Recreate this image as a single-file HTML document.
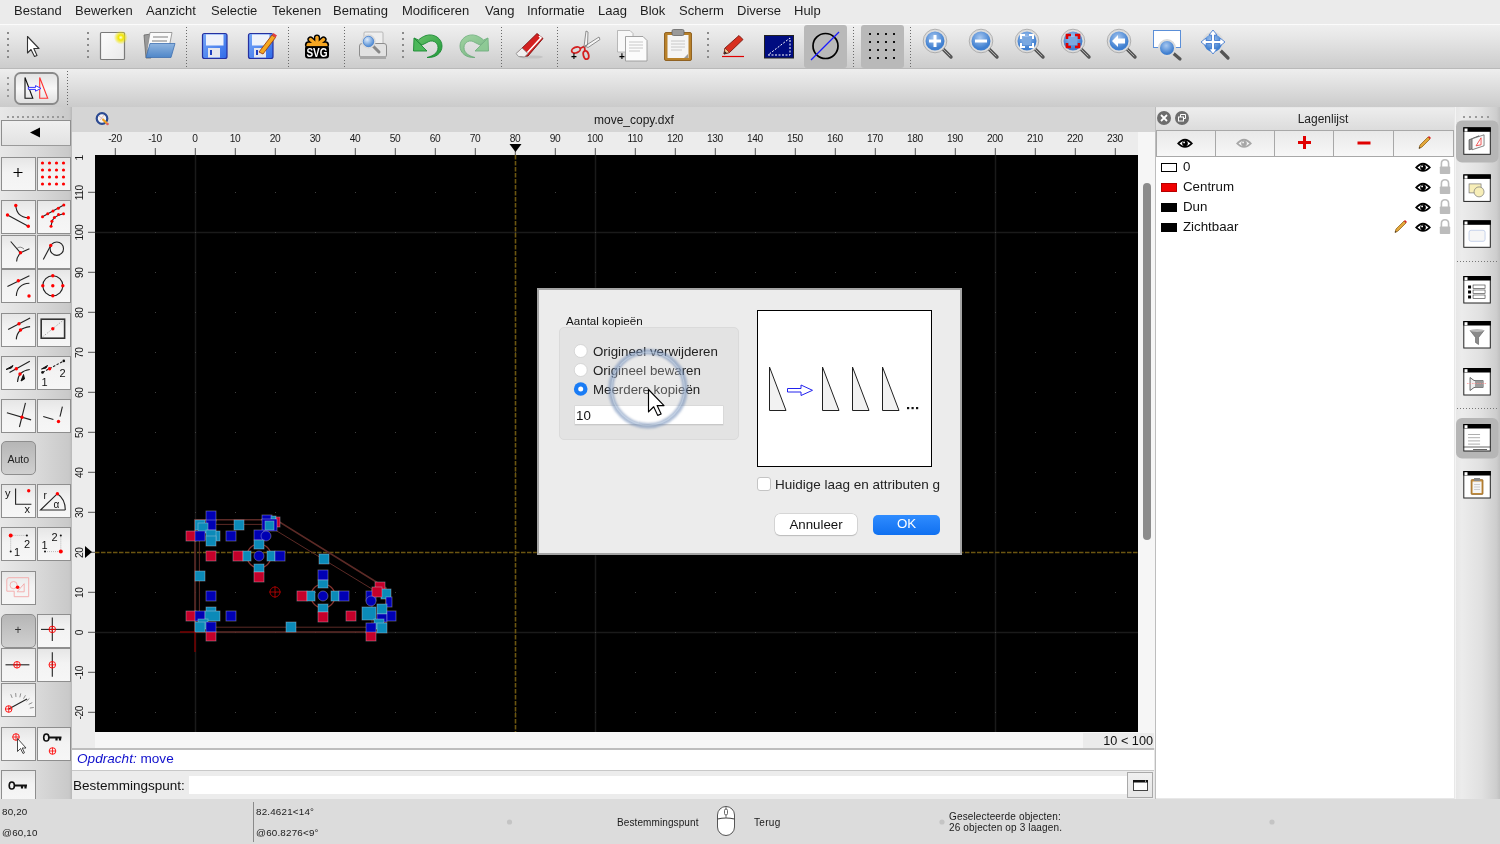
<!DOCTYPE html>
<html><head><meta charset="utf-8">
<style>
*{box-sizing:border-box;margin:0;padding:0}
html,body{width:1500px;height:844px;overflow:hidden;background:#e6e6e6;font-family:"Liberation Sans",sans-serif;color:#222}
.a{position:absolute}
svg{position:absolute;overflow:visible}
#menubar{left:0;top:0;width:1500px;height:24px;background:#ebebeb}
#menubar span{position:absolute;top:3px;font-size:13px;color:#1e1e1e;line-height:16px}
#tb1{left:0;top:24px;width:1500px;height:45px;background:linear-gradient(#efefef,#e6e6e6 30%,#cccccc);border-top:1px solid #fbfbfb;border-bottom:1px solid #b9b9b9}
#tb2{left:0;top:69px;width:1500px;height:39px;background:linear-gradient(#eeeeee,#e4e4e4 30%,#cbcbcb);border-bottom:1px solid #b6b6b6}
#left{left:0;top:107px;width:72px;height:692px;background:linear-gradient(90deg,#e8e8e8,#dadada 50%,#c9c9c9 96%,#b8b8b8)}
#title{left:72px;top:107px;width:1083px;height:25px;background:#d5d5d5}
#ruler{left:72px;top:132px;width:1083px;height:616px;background:#ececec}
#canvas{left:95px;top:155px;width:1043px;height:577px;background:#000;overflow:hidden}
#vscroll{left:1138px;top:132px;width:17px;height:616px;background:#f6f6f6}
#below{left:95px;top:732px;width:1043px;height:16px;background:#f6f6f6}
#cmdhist{left:72px;top:748px;width:1082px;height:23px;background:#fff;border-top:2px solid #bdbdbd;border-bottom:1px solid #c8c8c8}
#cmdline{left:72px;top:771px;width:1082px;height:28px;background:#ececec}
#dock{left:1155px;top:107px;width:300px;height:692px;background:#e8e8e8;border-left:1px solid #bdbdbd}
#rdock{left:1455px;top:107px;width:45px;height:692px;background:linear-gradient(90deg,#e6e6e6,#ececec 15%,#e0e0e0 60%,#cdcdcd 92%,#c0c0c0)}
#status{left:0;top:799px;width:1500px;height:45px;background:#dcdcdc}
.sep{position:absolute;width:2px;background-image:linear-gradient(#7a7a7a 50%,transparent 50%);background-size:2px 4px}
.hl{position:absolute;width:3px;background-image:radial-gradient(circle,#888 1px,transparent 1.2px);background-size:3px 8px}

</style></head><body><div id="root" style="position:absolute;left:0;top:0;width:1500px;height:844px;overflow:hidden;will-change:transform">
<div id="menubar" class="a">
<span style="left:14px">Bestand</span><span style="left:75px">Bewerken</span><span style="left:146px">Aanzicht</span><span style="left:211px">Selectie</span><span style="left:272px">Tekenen</span><span style="left:333px">Bemating</span><span style="left:402px">Modificeren</span><span style="left:485px">Vang</span><span style="left:527px">Informatie</span><span style="left:598px">Laag</span><span style="left:640px">Blok</span><span style="left:679px">Scherm</span><span style="left:737px">Diverse</span><span style="left:794px">Hulp</span>
</div>

<div id="tb1" class="a"></div>
<svg style="left:0;top:0" width="1500" height="70">
<defs>
<linearGradient id="gPaper" x1="0" y1="0" x2="1" y2="1"><stop offset="0" stop-color="#fdfdfd"/><stop offset="1" stop-color="#e9e9e9"/></linearGradient>
<radialGradient id="gGlow"><stop offset="0" stop-color="#ffffe0"/><stop offset="0.35" stop-color="#f2e600"/><stop offset="1" stop-color="#f2e600" stop-opacity="0"/></radialGradient>
<linearGradient id="gFold" x1="0" y1="0" x2="0" y2="1"><stop offset="0" stop-color="#8fb5e0"/><stop offset="1" stop-color="#4f86c8"/></linearGradient>
<linearGradient id="gSave" x1="0" y1="0" x2="1" y2="1"><stop offset="0" stop-color="#7aaaf8"/><stop offset="1" stop-color="#2f6ae8"/></linearGradient>
<linearGradient id="gGreen" x1="0" y1="0" x2="1" y2="1"><stop offset="0" stop-color="#6cc46c"/><stop offset="1" stop-color="#1f9a3a"/></linearGradient>
<radialGradient id="gLens" cx="0.4" cy="0.35"><stop offset="0" stop-color="#e0ecfa"/><stop offset="1" stop-color="#5d95d8"/></radialGradient>
<radialGradient id="gZoom" cx="0.45" cy="0.35"><stop offset="0" stop-color="#a8c8f0"/><stop offset="1" stop-color="#3f7fd0"/></radialGradient>
</defs>
<!-- handles / separators -->
<g fill="#8a8a8a">
<rect x="7" y="32" width="2" height="2"/><rect x="7" y="38" width="2" height="2"/><rect x="7" y="44" width="2" height="2"/><rect x="7" y="50" width="2" height="2"/><rect x="7" y="56" width="2" height="2"/>
<rect x="87" y="32" width="2" height="2"/><rect x="87" y="38" width="2" height="2"/><rect x="87" y="44" width="2" height="2"/><rect x="87" y="50" width="2" height="2"/><rect x="87" y="56" width="2" height="2"/>
<rect x="402" y="32" width="2" height="2"/><rect x="402" y="38" width="2" height="2"/><rect x="402" y="44" width="2" height="2"/><rect x="402" y="50" width="2" height="2"/><rect x="402" y="56" width="2" height="2"/>
<rect x="707" y="32" width="2" height="2"/><rect x="707" y="38" width="2" height="2"/><rect x="707" y="44" width="2" height="2"/><rect x="707" y="50" width="2" height="2"/><rect x="707" y="56" width="2" height="2"/>
</g>
<g stroke="#6a6a6a" stroke-width="1" stroke-dasharray="1,2">
<line x1="186.5" y1="27" x2="186.5" y2="67"/><line x1="288.5" y1="27" x2="288.5" y2="67"/><line x1="344.5" y1="27" x2="344.5" y2="67"/>
<line x1="501.5" y1="27" x2="501.5" y2="67"/><line x1="557.5" y1="27" x2="557.5" y2="67"/><line x1="853.5" y1="27" x2="853.5" y2="67"/><line x1="910.5" y1="27" x2="910.5" y2="67"/>
</g>
<!-- select arrow -->
<path d="M27.5,36.5 L27.5,53 L31,49.5 L34.5,56.5 L37,55.5 L33.8,48.5 L39,48.5 Z" fill="#fff" stroke="#333" stroke-width="1.1" stroke-linejoin="round"/>
<!-- new doc -->
<rect x="100.5" y="32.5" width="24" height="27" rx="1" fill="url(#gPaper)" stroke="#7a7a7a" stroke-width="1.2"/>
<circle cx="120.8" cy="37.5" r="7" fill="url(#gGlow)"/>
<!-- open folder -->
<path d="M144,35 L151,34 L151,58 L146,58 Z" fill="#9a9a9a" stroke="#666" stroke-width="0.8"/>
<path d="M150,32.5 L172,32.5 L169,48 L147,50 Z" fill="#fafafa" stroke="#888" stroke-width="0.8"/>
<rect x="153" y="36" width="15" height="2" fill="#bbb"/><rect x="152" y="40" width="15" height="2" fill="#bbb"/>
<path d="M150,43.5 L175,43.5 L171,57.5 L146,57.5 Z" fill="url(#gFold)" stroke="#3f70b0" stroke-width="0.8"/>
<!-- save -->
<rect x="202.5" y="33.5" width="24.5" height="25" rx="2" fill="url(#gSave)" stroke="#2530a0" stroke-width="1.2"/>
<rect x="206" y="34.5" width="17.5" height="11" fill="#eef2fb"/>
<rect x="208" y="48" width="12" height="9.5" fill="#e4e6ee"/><rect x="210" y="50" width="2" height="5" fill="#1f40c0"/>
<!-- save as -->
<rect x="248.5" y="33.5" width="24.5" height="25" rx="2" fill="url(#gSave)" stroke="#2530a0" stroke-width="1.2"/>
<rect x="252" y="34.5" width="17.5" height="11" fill="#eef2fb"/>
<rect x="254" y="48" width="12" height="9.5" fill="#e4e6ee"/><rect x="256" y="50" width="2" height="5" fill="#1f40c0"/>
<path d="M259,52 L272,35 L275.5,37.5 L263,54 Z" fill="#f4a820" stroke="#a04010" stroke-width="0.9"/>
<path d="M272,35 L273.5,33 L277,35.5 L275.5,37.5 Z" fill="#e04040"/>
<!-- svg -->
<g stroke-linecap="round">
<g stroke="#000" stroke-width="6.2"><line x1="317" y1="46" x2="317" y2="37.5"/><line x1="317" y1="46" x2="310.5" y2="39.5"/><line x1="317" y1="46" x2="323.5" y2="39.5"/><line x1="317" y1="46" x2="308" y2="44.5"/><line x1="317" y1="46" x2="326" y2="44.5"/></g>
<g stroke="#f5a623" stroke-width="3.4"><line x1="317" y1="45" x2="317" y2="37.5"/><line x1="317" y1="45" x2="310.5" y2="39.5"/><line x1="317" y1="45" x2="323.5" y2="39.5"/><line x1="317" y1="45" x2="308.5" y2="44.5"/><line x1="317" y1="45" x2="325.5" y2="44.5"/></g>
</g>
<rect x="305" y="45.5" width="24" height="13" rx="3" fill="#000"/>
<rect x="306.5" y="44.5" width="21" height="1.6" fill="#f5a623"/>
<text x="317" y="57" font-size="12.5" font-weight="bold" text-anchor="middle" fill="#fff" font-family="Liberation Sans" transform="translate(317,0) scale(0.8,1) translate(-317,0)">SVG</text>
<!-- print preview -->
<rect x="364" y="32" width="19" height="15" rx="1" fill="#eee" stroke="#aaa" stroke-width="0.8"/>
<rect x="359.5" y="43.5" width="27" height="14" rx="2.5" fill="#e2e2e2" stroke="#8d8d8d" stroke-width="1"/>
<rect x="360" y="56" width="26" height="3" fill="#a8a8a8"/>
<line x1="372" y1="45" x2="379" y2="52" stroke="#888" stroke-width="3" stroke-linecap="round"/>
<circle cx="368.5" cy="41.5" r="6.3" fill="url(#gLens)" stroke="#d8d8d8" stroke-width="1.8"/>
<circle cx="368.5" cy="41.5" r="5.2" fill="none" stroke="#4a84d0" stroke-width="0.8"/>
<!-- undo -->
<path d="M414,38 L422,45 L427,42.5 C432,39 438,42 438,47.5 C438,53 433,56 427,57.5 C436,58 442,53 442,46 C442,38.5 434,33 426,35.5 C423,36.5 420,38.5 418.5,40 Z" fill="url(#gGreen)" stroke="#1c8a34" stroke-width="0.9"/>
<path d="M414,38 L413.5,51 L427,51 Z" fill="#4cb85a" stroke="#1c8a34" stroke-width="0.9"/>
<!-- redo -->
<g opacity="0.55">
<path d="M488,38 L480,45 L475,42.5 C470,39 464,42 464,47.5 C464,53 469,56 475,57.5 C466,58 460,53 460,46 C460,38.5 468,33 476,35.5 C479,36.5 482,38.5 483.5,40 Z" fill="url(#gGreen)" stroke="#1c8a34" stroke-width="0.9"/>
<path d="M488,38 L488.5,51 L475,51 Z" fill="#4cb85a" stroke="#1c8a34" stroke-width="0.9"/>
</g>
<!-- eraser -->
<ellipse cx="531" cy="57" rx="12" ry="1.6" fill="#bbb" opacity="0.7"/>
<path d="M537,33.5 L543,38.5 L528,56 L521,56.5 L517,53 Z" fill="#d42020" stroke="#7a1010" stroke-width="0.9"/>
<path d="M539,36 L541,37.8 L527,53" stroke="#fff" stroke-width="1.6" fill="none"/>
<path d="M522,48 L528,53.5 L524.5,57 L518.5,56.5 L516,53.5 Z" fill="#f0f0f0" stroke="#888" stroke-width="0.8"/>
<!-- cut -->
<g fill="none" stroke="#d42020" stroke-width="1.8">
<ellipse cx="576" cy="50" rx="4.5" ry="2.8" transform="rotate(-20 576 50)"/>
<ellipse cx="586" cy="55" rx="2.6" ry="4.2" transform="rotate(-15 586 55)"/>
<path d="M580,48.5 L585,46 M585,51 L584.5,47"/>
</g>
<path d="M584,47 L586,31 L588,32 L587.5,45 Z M585,46 L599,37 L600,39.5 L588,47.5 Z" fill="#f5f5f5" stroke="#777" stroke-width="0.8"/>
<text x="571" y="60" font-size="10" font-weight="bold" fill="#000" font-family="Liberation Sans">+</text>
<!-- copy -->
<path d="M617.5,30.5 L630,30.5 L633,33.5 L633,52 L617.5,52 Z" fill="#f8f8f8" stroke="#aaa" stroke-width="0.8"/>
<path d="M625.5,36.5 L643,36.5 L647,40.5 L647,61 L625.5,61 Z" fill="#fbfbfb" stroke="#999" stroke-width="0.9"/>
<g stroke="#c8c8c8" stroke-width="1"><line x1="629" y1="42" x2="643" y2="42"/><line x1="629" y1="45" x2="643" y2="45"/><line x1="629" y1="48" x2="643" y2="48"/><line x1="629" y1="51" x2="640" y2="51"/></g>
<text x="619" y="60" font-size="10" font-weight="bold" fill="#000" font-family="Liberation Sans">+</text>
<!-- paste -->
<rect x="664.5" y="32.5" width="27" height="28" rx="1.5" fill="#b8812a" stroke="#8a5a18" stroke-width="0.9"/>
<rect x="667.5" y="35" width="21" height="23" fill="#f5f5f5"/>
<g stroke="#c8c8c8" stroke-width="1"><line x1="671" y1="41" x2="685" y2="41"/><line x1="671" y1="44" x2="685" y2="44"/><line x1="671" y1="47" x2="685" y2="47"/><line x1="671" y1="50" x2="682" y2="50"/></g>
<rect x="672" y="29.5" width="12" height="6" rx="1.5" fill="#9a9a9a" stroke="#666" stroke-width="0.8"/>
<path d="M688,54 L688,58 L684,58 Z" fill="#999"/>
<!-- pencil -->
<line x1="722" y1="56.5" x2="744" y2="56.5" stroke="#e00000" stroke-width="1.2"/>
<path d="M724,54 L725,48 L739,35.5 L743,39.5 L729.5,52.5 Z" fill="#d83020" stroke="#7a1a10" stroke-width="0.9"/>
<path d="M724,54 L725,48 L729.5,52.5 Z" fill="#f0c890" stroke="#7a1a10" stroke-width="0.7"/>
<path d="M724,54 L724.6,51 L727,53.3 Z" fill="#222"/>
<!-- rect icon -->
<rect x="764.5" y="35.5" width="29" height="22.5" fill="#000c80" stroke="#222" stroke-width="1"/>
<path d="M768,55 L790,55 L790,38 Z" fill="none" stroke="#fff" stroke-width="1" stroke-dasharray="2,1.5"/>
<!-- toggled buttons -->
<rect x="804" y="25" width="43" height="43" rx="3" fill="#b9b9b9"/>
<circle cx="825.5" cy="46" r="12.5" fill="none" stroke="#000" stroke-width="1.7"/>
<line x1="811" y1="60" x2="839" y2="32" stroke="#1a1aff" stroke-width="1.2"/>
<rect x="861" y="25" width="43" height="43" rx="3" fill="#b9b9b9"/>
<g fill="#111"><rect x="869" y="33" width="2" height="2"/><rect x="869" y="41" width="2" height="2"/><rect x="869" y="49" width="2" height="2"/><rect x="869" y="57" width="2" height="2"/><rect x="877" y="33" width="2" height="2"/><rect x="877" y="41" width="2" height="2"/><rect x="877" y="49" width="2" height="2"/><rect x="877" y="57" width="2" height="2"/><rect x="885" y="33" width="2" height="2"/><rect x="885" y="41" width="2" height="2"/><rect x="885" y="49" width="2" height="2"/><rect x="885" y="57" width="2" height="2"/><rect x="893" y="33" width="2" height="2"/><rect x="893" y="41" width="2" height="2"/><rect x="893" y="49" width="2" height="2"/><rect x="893" y="57" width="2" height="2"/></g>
<line x1="942" y1="48" x2="951" y2="57" stroke="#555" stroke-width="3.4" stroke-linecap="round"/><line x1="943" y1="49" x2="950" y2="56" stroke="#aaa" stroke-width="1" stroke-linecap="round"/><circle cx="935" cy="41" r="10.5" fill="url(#gZoom)" stroke="#dcdcdc" stroke-width="2"/><circle cx="935" cy="41" r="11.8" fill="none" stroke="#9a9a9a" stroke-width="0.7"/><path d="M929,41 h12 M935,35 v12" stroke="#fff" stroke-width="3"/><line x1="988" y1="48" x2="997" y2="57" stroke="#555" stroke-width="3.4" stroke-linecap="round"/><line x1="989" y1="49" x2="996" y2="56" stroke="#aaa" stroke-width="1" stroke-linecap="round"/><circle cx="981" cy="41" r="10.5" fill="url(#gZoom)" stroke="#dcdcdc" stroke-width="2"/><circle cx="981" cy="41" r="11.8" fill="none" stroke="#9a9a9a" stroke-width="0.7"/><path d="M975,41 h12" stroke="#fff" stroke-width="3"/><line x1="1034" y1="48" x2="1043" y2="57" stroke="#555" stroke-width="3.4" stroke-linecap="round"/><line x1="1035" y1="49" x2="1042" y2="56" stroke="#aaa" stroke-width="1" stroke-linecap="round"/><circle cx="1027" cy="41" r="10.5" fill="url(#gZoom)" stroke="#dcdcdc" stroke-width="2"/><circle cx="1027" cy="41" r="11.8" fill="none" stroke="#9a9a9a" stroke-width="0.7"/><rect x="1023" y="37" width="8" height="8" fill="#7aa8e0"/><path d="M1021,39 v-4 h4 M1029,35 h4 v4 M1033,43 v4 h-4 M1025,47 h-4 v-4" stroke="#fff" stroke-width="2" fill="none"/><line x1="1080" y1="48" x2="1089" y2="57" stroke="#555" stroke-width="3.4" stroke-linecap="round"/><line x1="1081" y1="49" x2="1088" y2="56" stroke="#aaa" stroke-width="1" stroke-linecap="round"/><circle cx="1073" cy="41" r="10.5" fill="url(#gZoom)" stroke="#dcdcdc" stroke-width="2"/><circle cx="1073" cy="41" r="11.8" fill="none" stroke="#9a9a9a" stroke-width="0.7"/><rect x="1069" y="37" width="8" height="8" fill="#7aa8e0"/><path d="M1067,39 v-4 h4 M1075,35 h4 v4 M1079,43 v4 h-4 M1071,47 h-4 v-4" stroke="#e00000" stroke-width="2.6" fill="none"/><line x1="1126" y1="48" x2="1135" y2="57" stroke="#555" stroke-width="3.4" stroke-linecap="round"/><line x1="1127" y1="49" x2="1134" y2="56" stroke="#aaa" stroke-width="1" stroke-linecap="round"/><circle cx="1119" cy="41" r="10.5" fill="url(#gZoom)" stroke="#dcdcdc" stroke-width="2"/><circle cx="1119" cy="41" r="11.8" fill="none" stroke="#9a9a9a" stroke-width="0.7"/><path d="M1112,41 l6,-6 v3.5 h7 v5 h-7 v3.5 z" fill="#fff"/><rect x="1153.5" y="30.5" width="27" height="17" fill="#fff" stroke="#5b8fd8" stroke-width="1"/><line x1="1173" y1="53" x2="1180" y2="59" stroke="#555" stroke-width="3.2" stroke-linecap="round"/><circle cx="1167" cy="48" r="8" fill="url(#gZoom)" stroke="#dcdcdc" stroke-width="2"/><line x1="1220" y1="50" x2="1228" y2="58" stroke="#555" stroke-width="3.2" stroke-linecap="round"/><circle cx="1213" cy="43" r="10" fill="url(#gZoom)" stroke="#dcdcdc" stroke-width="2"/><path d="M1213,30 l-4,5 h2.5 v5.5 h-5.5 v-2.5 l-5,4 l5,4 v-2.5 h5.5 v5.5 h-2.5 l4,5 l4,-5 h-2.5 v-5.5 h5.5 v2.5 l5,-4 l-5,-4 v2.5 h-5.5 v-5.5 h2.5 z" fill="#fff" stroke="#4a7fd0" stroke-width="0.9"/></svg>
<div id="tb2" class="a"></div>
<svg style="left:0;top:0" width="120" height="132">
<g fill="#999"><rect x="7" y="77" width="2" height="2"/><rect x="7" y="83" width="2" height="2"/><rect x="7" y="89" width="2" height="2"/><rect x="7" y="95" width="2" height="2"/></g>
<line x1="67.5" y1="71" x2="67.5" y2="105" stroke="#666" stroke-width="1" stroke-dasharray="1,2"/>
<defs><linearGradient id="gB2" x1="0" y1="0" x2="0" y2="1"><stop offset="0" stop-color="#e2e2e2"/><stop offset="0.5" stop-color="#f8f8f8"/><stop offset="1" stop-color="#dedede"/></linearGradient></defs>
<rect x="15" y="73" width="43" height="31" rx="5.5" fill="url(#gB2)" stroke="#8a8a8a" stroke-width="1.8"/>
<path d="M25,77.5 L25,98.3 L32.8,98.3 Z" fill="none" stroke="#111" stroke-width="1.1"/>
<path d="M39.7,77.5 L39.7,98.3 L47.7,98.3 Z" fill="none" stroke="#f33" stroke-width="1.1"/>
<path d="M28.3,87.4 H35.5 V85.6 L41,88.4 L35.5,91.2 V89.4 H28.3 Z" fill="#fff" stroke="#3333ff" stroke-width="1"/>
</svg>

<div id="left" class="a"></div>
<div class="a" style="left:1px;top:157px;width:34.5px;height:34px;background:linear-gradient(#e6e6e6,#f3f3f3 45%,#f6f6f6);border:1.5px solid #8e8e8e"></div>
<div class="a" style="left:36.5px;top:157px;width:34.5px;height:34px;background:linear-gradient(#e6e6e6,#f3f3f3 45%,#f6f6f6);border:1.5px solid #8e8e8e"></div>
<div class="a" style="left:1px;top:200px;width:34.5px;height:34px;background:linear-gradient(#e6e6e6,#f3f3f3 45%,#f6f6f6);border:1.5px solid #8e8e8e"></div>
<div class="a" style="left:36.5px;top:200px;width:34.5px;height:34px;background:linear-gradient(#e6e6e6,#f3f3f3 45%,#f6f6f6);border:1.5px solid #8e8e8e"></div>
<div class="a" style="left:1px;top:234.5px;width:34.5px;height:34px;background:linear-gradient(#e6e6e6,#f3f3f3 45%,#f6f6f6);border:1.5px solid #8e8e8e"></div>
<div class="a" style="left:36.5px;top:234.5px;width:34.5px;height:34px;background:linear-gradient(#e6e6e6,#f3f3f3 45%,#f6f6f6);border:1.5px solid #8e8e8e"></div>
<div class="a" style="left:1px;top:269px;width:34.5px;height:34px;background:linear-gradient(#e6e6e6,#f3f3f3 45%,#f6f6f6);border:1.5px solid #8e8e8e"></div>
<div class="a" style="left:36.5px;top:269px;width:34.5px;height:34px;background:linear-gradient(#e6e6e6,#f3f3f3 45%,#f6f6f6);border:1.5px solid #8e8e8e"></div>
<div class="a" style="left:1px;top:313px;width:34.5px;height:34px;background:linear-gradient(#e6e6e6,#f3f3f3 45%,#f6f6f6);border:1.5px solid #8e8e8e"></div>
<div class="a" style="left:36.5px;top:313px;width:34.5px;height:34px;background:linear-gradient(#e6e6e6,#f3f3f3 45%,#f6f6f6);border:1.5px solid #8e8e8e"></div>
<div class="a" style="left:1px;top:356px;width:34.5px;height:34px;background:linear-gradient(#e6e6e6,#f3f3f3 45%,#f6f6f6);border:1.5px solid #8e8e8e"></div>
<div class="a" style="left:36.5px;top:356px;width:34.5px;height:34px;background:linear-gradient(#e6e6e6,#f3f3f3 45%,#f6f6f6);border:1.5px solid #8e8e8e"></div>
<div class="a" style="left:1px;top:399px;width:34.5px;height:34px;background:linear-gradient(#e6e6e6,#f3f3f3 45%,#f6f6f6);border:1.5px solid #8e8e8e"></div>
<div class="a" style="left:36.5px;top:399px;width:34.5px;height:34px;background:linear-gradient(#e6e6e6,#f3f3f3 45%,#f6f6f6);border:1.5px solid #8e8e8e"></div>
<div class="a" style="left:1px;top:120px;width:70px;height:26px;background:linear-gradient(#f0f0f0,#e2e2e2);border:1.5px solid #8e8e8e;border-bottom-color:#9a9a9a"></div>
<div class="a" style="left:1px;top:441px;width:34.5px;height:34px;border-radius:5px;background:linear-gradient(#b6b6b6,#d0d0d0);border:1.3px solid #8e8e8e"></div>
<div class="a" style="left:1px;top:484px;width:34.5px;height:34px;background:linear-gradient(#e6e6e6,#f3f3f3 45%,#f6f6f6);border:1.5px solid #8e8e8e"></div>
<div class="a" style="left:36.5px;top:484px;width:34.5px;height:34px;background:linear-gradient(#e6e6e6,#f3f3f3 45%,#f6f6f6);border:1.5px solid #8e8e8e"></div>
<div class="a" style="left:1px;top:527px;width:34.5px;height:34px;background:linear-gradient(#e6e6e6,#f3f3f3 45%,#f6f6f6);border:1.5px solid #8e8e8e"></div>
<div class="a" style="left:36.5px;top:527px;width:34.5px;height:34px;background:linear-gradient(#e6e6e6,#f3f3f3 45%,#f6f6f6);border:1.5px solid #8e8e8e"></div>
<div class="a" style="left:1px;top:570.5px;width:34.5px;height:34px;background:linear-gradient(#e6e6e6,#f3f3f3 45%,#f6f6f6);border:1.5px solid #8e8e8e"></div>
<div class="a" style="left:1px;top:613.5px;width:34.5px;height:34px;border-radius:5px;background:linear-gradient(#b6b6b6,#d0d0d0);border:1.3px solid #8e8e8e"></div>
<div class="a" style="left:36.5px;top:613.5px;width:34.5px;height:34px;background:linear-gradient(#e6e6e6,#f3f3f3 45%,#f6f6f6);border:1.5px solid #8e8e8e"></div>
<div class="a" style="left:1px;top:648px;width:34.5px;height:34px;background:linear-gradient(#e6e6e6,#f3f3f3 45%,#f6f6f6);border:1.5px solid #8e8e8e"></div>
<div class="a" style="left:36.5px;top:648px;width:34.5px;height:34px;background:linear-gradient(#e6e6e6,#f3f3f3 45%,#f6f6f6);border:1.5px solid #8e8e8e"></div>
<div class="a" style="left:1px;top:683px;width:34.5px;height:34px;background:linear-gradient(#e6e6e6,#f3f3f3 45%,#f6f6f6);border:1.5px solid #8e8e8e"></div>
<div class="a" style="left:1px;top:726.5px;width:34.5px;height:34px;background:linear-gradient(#e6e6e6,#f3f3f3 45%,#f6f6f6);border:1.5px solid #8e8e8e"></div>
<div class="a" style="left:36.5px;top:726.5px;width:34.5px;height:34px;background:linear-gradient(#e6e6e6,#f3f3f3 45%,#f6f6f6);border:1.5px solid #8e8e8e"></div>
<div class="a" style="left:1px;top:769.5px;width:34.5px;height:32px;background:linear-gradient(#e6e6e6,#f3f3f3 45%,#f6f6f6);border:1.5px solid #8e8e8e"></div>
<svg style="left:0;top:0" width="72" height="844">
<g fill="#999"><rect x="7" y="116" width="2" height="2"/><rect x="12" y="116" width="2" height="2"/><rect x="17" y="116" width="2" height="2"/><rect x="22" y="116" width="2" height="2"/><rect x="27" y="116" width="2" height="2"/><rect x="32" y="116" width="2" height="2"/><rect x="37" y="116" width="2" height="2"/><rect x="42" y="116" width="2" height="2"/><rect x="47" y="116" width="2" height="2"/><rect x="52" y="116" width="2" height="2"/><rect x="57" y="116" width="2" height="2"/><rect x="62" y="116" width="2" height="2"/></g>
<path d="M30,132.5 L40,127.5 L40,137.5 Z" fill="#000"/>
<g transform="translate(1,157)"><path d="M12.5,15.5 h9 M17,11 v9" stroke="#000" stroke-width="1.1"/></g>
<g transform="translate(36.5,157)"><circle cx="6" cy="6" r="1.6" fill="#f00"/><circle cx="6" cy="13" r="1.6" fill="#f00"/><circle cx="6" cy="20" r="1.6" fill="#f00"/><circle cx="6" cy="27" r="1.6" fill="#f00"/><circle cx="13" cy="6" r="1.6" fill="#f00"/><circle cx="13" cy="13" r="1.6" fill="#f00"/><circle cx="13" cy="20" r="1.6" fill="#f00"/><circle cx="13" cy="27" r="1.6" fill="#f00"/><circle cx="20" cy="6" r="1.6" fill="#f00"/><circle cx="20" cy="13" r="1.6" fill="#f00"/><circle cx="20" cy="20" r="1.6" fill="#f00"/><circle cx="20" cy="27" r="1.6" fill="#f00"/><circle cx="27" cy="6" r="1.6" fill="#f00"/><circle cx="27" cy="13" r="1.6" fill="#f00"/><circle cx="27" cy="20" r="1.6" fill="#f00"/><circle cx="27" cy="27" r="1.6" fill="#f00"/></g>
<g transform="translate(1,200)"><line x1="6.5" y1="15" x2="27.3" y2="26.3" stroke="#222" stroke-width="1.1"/><path d="M14.8,5.5 Q15.5,17 27.3,17.8" fill="none" stroke="#222" stroke-width="1.1"/><circle cx="6.5" cy="15" r="1.7" fill="#f00"/><circle cx="27.3" cy="26.3" r="1.7" fill="#f00"/><circle cx="14.8" cy="5.5" r="1.7" fill="#f00"/><circle cx="27.3" cy="17.8" r="1.7" fill="#f00"/></g>
<g transform="translate(36.5,200)"><polyline points="6,16.7 27.3,5" fill="none" stroke="#222" stroke-width="1.1"/><path d="M14.5,26.3 L15.6,21.3 Q17.5,16 27,13.8" fill="none" stroke="#222" stroke-width="1.1"/><circle cx="6" cy="16.7" r="1.5" fill="#f00"/><circle cx="11.2" cy="13.8" r="1.5" fill="#f00"/><circle cx="16.5" cy="11" r="1.5" fill="#f00"/><circle cx="21.8" cy="8.2" r="1.5" fill="#f00"/><circle cx="27.3" cy="5" r="1.5" fill="#f00"/><circle cx="14.5" cy="26.3" r="1.5" fill="#f00"/><circle cx="15.4" cy="21.3" r="1.5" fill="#f00"/><circle cx="17.9" cy="17.5" r="1.5" fill="#f00"/><circle cx="22" cy="14.6" r="1.5" fill="#f00"/><circle cx="27" cy="13.8" r="1.5" fill="#f00"/></g>
<g transform="translate(1,234.5)"><line x1="9.7" y1="7" x2="19.5" y2="18.3" stroke="#222" stroke-width="1.1"/><line x1="19.5" y1="18.3" x2="28.4" y2="14.2" stroke="#222" stroke-width="1.1"/><path d="M19.5,18.3 Q16,22 15.6,27" fill="none" stroke="#222" stroke-width="1.1"/><path d="M16,14 Q19,11 23,14.5" fill="none" stroke="#444" stroke-width="0.6"/><circle cx="19.5" cy="18.3" r="1.7" fill="#f00"/></g>
<g transform="translate(36.5,234.5)"><circle cx="20.3" cy="14.2" r="6.7" fill="none" stroke="#222" stroke-width="1.1"/><line x1="6.8" y1="25" x2="14.2" y2="11" stroke="#222" stroke-width="1.1"/><circle cx="14.2" cy="11" r="1.7" fill="#f00"/></g>
<g transform="translate(1,269)"><line x1="6.4" y1="17.5" x2="28.4" y2="6.7" stroke="#222" stroke-width="1.1"/><circle cx="17.3" cy="11.7" r="1.7" fill="#f00"/><path d="M15.3,27 Q16,15 28.4,14.3" fill="none" stroke="#222" stroke-width="1.1"/><circle cx="28" cy="27" r="1.7" fill="#f00"/></g>
<g transform="translate(36.5,269)"><circle cx="16.3" cy="16.8" r="10" fill="none" stroke="#222" stroke-width="1.1"/><circle cx="16.3" cy="16.8" r="1.7" fill="#f00"/><circle cx="6.3" cy="16.8" r="1.7" fill="#f00"/><circle cx="26.3" cy="16.8" r="1.7" fill="#f00"/><circle cx="16.3" cy="6.8" r="1.7" fill="#f00"/><circle cx="16.3" cy="26.8" r="1.7" fill="#f00"/></g>
<g transform="translate(1,313)"><line x1="7.1" y1="16.4" x2="29.1" y2="5" stroke="#222" stroke-width="1.1"/><circle cx="18" cy="10.8" r="1.7" fill="#f00"/><path d="M15.3,26.4 Q16,15 29.1,13.6" fill="none" stroke="#222" stroke-width="1.1"/><circle cx="19.5" cy="17" r="1.7" fill="#f00"/></g>
<g transform="translate(36.5,313)"><rect x="4.7" y="6.2" width="23.4" height="19" fill="none" stroke="#333" stroke-width="1.6"/><line x1="6" y1="24" x2="27" y2="7" stroke="#888" stroke-width="0.7" stroke-dasharray="1.5,1.5"/><circle cx="16.3" cy="15.7" r="1.7" fill="#f00"/></g>
<g transform="translate(1,356)"><line x1="8.5" y1="16.4" x2="28.8" y2="5.2" stroke="#222" stroke-width="1.1"/><path d="M16.5,26 Q17,15 28.8,13.5" fill="none" stroke="#222" stroke-width="1.1"/><path d="M5,13.5 L12,9.5 L10.5,12 Z M20,25 L22.5,18.5 L23.5,23 Z" fill="#111" stroke="#111" stroke-width="1"/><circle cx="15.3" cy="12.7" r="1.7" fill="#f00"/><circle cx="19" cy="18" r="1.7" fill="#f00"/></g>
<g transform="translate(36.5,356)"><line x1="6" y1="16.4" x2="27.3" y2="4.9" stroke="#222" stroke-width="1.1" stroke-dasharray="2.5,1.5"/><path d="M5,13 L11,9.5 L9.5,12 Z" fill="#111" stroke="#111"/><circle cx="27.3" cy="4.9" r="1.3" fill="#111"/><circle cx="6" cy="16.4" r="1.3" fill="#111"/><circle cx="13.1" cy="12.7" r="1.7" fill="#f00"/><text x="5" y="30" font-size="11" fill="#111">1</text><text x="23" y="21" font-size="11" fill="#111">2</text></g>
<g transform="translate(1,399)"><line x1="5.9" y1="13.8" x2="30.1" y2="20.9" stroke="#222" stroke-width="1.1"/><line x1="24.5" y1="3.8" x2="18.4" y2="28" stroke="#222" stroke-width="1.1"/><circle cx="21" cy="18.2" r="1.7" fill="#f00"/></g>
<g transform="translate(36.5,399)"><line x1="6.7" y1="17.4" x2="16.9" y2="20.6" stroke="#222" stroke-width="1.1"/><line x1="25.9" y1="7.6" x2="23.5" y2="17.7" stroke="#222" stroke-width="1.1"/><circle cx="22" cy="22.5" r="1.7" fill="#f00"/></g>
<text x="18.3" y="463" font-size="10.6" text-anchor="middle" fill="#222">Auto</text>
<g transform="translate(1,484)"><text x="4" y="13" font-size="11" fill="#111">y</text><path d="M14.6,4.6 V20.3 H30.4" fill="none" stroke="#222" stroke-width="1.1"/><circle cx="27.7" cy="6.8" r="1.7" fill="#f00"/><text x="23.5" y="29" font-size="11" fill="#111">x</text></g>
<g transform="translate(36.5,484)"><path d="M28.8,26 H4 L20.9,9.7 Q28.8,15 28.8,26" fill="none" stroke="#222" stroke-width="1.1"/><circle cx="20.9" cy="9.7" r="1.7" fill="#f00"/><text x="7" y="15" font-size="10" fill="#111">r</text><text x="17" y="23.5" font-size="10" fill="#111">α</text></g>
<g transform="translate(1,527)"><path d="M9.7,8.4 H25.9 M9.7,8.4 V24.6" stroke="#aaa" stroke-width="0.8" stroke-dasharray="1,1"/><circle cx="9.7" cy="8.4" r="2" fill="#f00"/><circle cx="25.9" cy="8.4" r="1" fill="#111"/><circle cx="9.7" cy="24.6" r="1" fill="#111"/><text x="13" y="29" font-size="11" fill="#111">1</text><text x="23" y="21" font-size="11" fill="#111">2</text></g>
<g transform="translate(36.5,527)"><path d="M8.5,24.6 H24.3 M24.3,8.4 V24.6" stroke="#aaa" stroke-width="0.8" stroke-dasharray="1,1"/><circle cx="24.3" cy="24.6" r="2" fill="#f00"/><circle cx="8.5" cy="24.6" r="1" fill="#111"/><circle cx="24.3" cy="8.4" r="1" fill="#111"/><text x="5" y="22" font-size="11" fill="#111">1</text><text x="15" y="14" font-size="11" fill="#111">2</text></g>
<g transform="translate(1,570.5)"><path d="M8,7.2 H27.7 V26.2 H13.2 V20.7 H5.8 V9.5 Q5.8,7.2 8,7.2" fill="none" stroke="#f4a8a8" stroke-width="0.9"/><circle cx="12.6" cy="14.6" r="3.6" fill="none" stroke="#f4a8a8" stroke-width="0.9"/><path d="M23.2,13.2 V21.3 H16.1 Z" fill="none" stroke="#f4a8a8" stroke-width="0.9"/><circle cx="16.6" cy="16.7" r="1.8" fill="#f00"/></g>
<text x="18" y="634" font-size="12" text-anchor="middle" fill="#333">+</text>
<g transform="translate(36.5,613.5)"><line x1="4.5" y1="15.9" x2="27.8" y2="15.9" stroke="#222" stroke-width="1.1"/><line x1="15.8" y1="3.9" x2="15.8" y2="27.5" stroke="#222" stroke-width="1.1"/><circle cx="15.8" cy="15.9" r="3.3" fill="none" stroke="#f00" stroke-width="0.9"/><path d="M12.5,15.9 h6.6 M15.8,12.600000000000001 v6.6" stroke="#f00" stroke-width="0.8"/></g>
<g transform="translate(1,648)"><line x1="4.5" y1="16.8" x2="28.4" y2="16.8" stroke="#222" stroke-width="1.1"/><circle cx="16" cy="16.8" r="3.3" fill="none" stroke="#f00" stroke-width="0.9"/><path d="M12.7,16.8 h6.6 M16,13.5 v6.6" stroke="#f00" stroke-width="0.8"/></g>
<g transform="translate(36.5,648)"><line x1="15.8" y1="4.3" x2="15.8" y2="28.7" stroke="#222" stroke-width="1.1"/><circle cx="15.8" cy="16.8" r="3.3" fill="none" stroke="#f00" stroke-width="0.9"/><path d="M12.5,16.8 h6.6 M15.8,13.5 v6.6" stroke="#f00" stroke-width="0.8"/></g>
<g transform="translate(1,683)"><line x1="28.854024013168548" y1="25.057304277843212" x2="32.809108324912714" y2="24.459551747948815" stroke="#777" stroke-width="0.8"/><line x1="27.7058123305848" y1="21.345448056554005" x2="31.307600739995507" y2="19.605585920109085" stroke="#777" stroke-width="0.8"/><line x1="25.51195529535967" y1="18.138696119696654" x2="28.438710770854954" y2="15.41214107960332" stroke="#777" stroke-width="0.8"/><line x1="22.46842362259245" y1="15.723498067277779" x2="24.45870781415936" y2="12.253805164901712" stroke="#777" stroke-width="0.8"/><line x1="18.84708693220954" y1="14.315596348253433" x2="19.723113680581704" y2="10.412702916946795" stroke="#777" stroke-width="0.8"/><line x1="14.97142844551246" y1="14.040754630099055" x2="14.654944890285524" y2="10.05329451628338" stroke="#777" stroke-width="0.8"/><line x1="11.18764919243327" y1="14.923523704949698" x2="9.706925867028122" y2="11.20768484493422" stroke="#777" stroke-width="0.8"/><line x1="7.7" y1="26" x2="26" y2="16" stroke="#222" stroke-width="1.1"/><circle cx="7.7" cy="26" r="3.3" fill="none" stroke="#f00" stroke-width="0.9"/><path d="M4.4,26 h6.6 M7.7,22.7 v6.6" stroke="#f00" stroke-width="0.8"/></g>
<g transform="translate(1,726.5)"><circle cx="15" cy="10.5" r="3.3" fill="none" stroke="#f00" stroke-width="0.9"/><path d="M11.7,10.5 h6.6 M15,7.2 v6.6" stroke="#f00" stroke-width="0.8"/><path d="M16.5,12 L16.5,25 L19.5,22 L22,27 L23.5,26.2 L21.2,21.5 L25,21.5 Z" fill="#fff" stroke="#333" stroke-width="0.9"/></g>
<g transform="translate(36.5,726.5)"><g transform="translate(7,8)"><ellipse cx="2.8" cy="3" rx="2.6" ry="3.5" fill="none" stroke="#111" stroke-width="1.6"/><path d="M5.5,3 H18 M13,3 V6 M16.5,3 V6" stroke="#111" stroke-width="2.2"/></g><circle cx="16" cy="24.5" r="3.3" fill="none" stroke="#f00" stroke-width="0.9"/><path d="M12.7,24.5 h6.6 M16,21.2 v6.6" stroke="#f00" stroke-width="0.8"/></g>
<g transform="translate(1,769.5)"><g transform="translate(8,13)"><ellipse cx="2.8" cy="3" rx="2.6" ry="3.5" fill="none" stroke="#111" stroke-width="1.6"/><path d="M5.5,3 H18 M13,3 V6 M16.5,3 V6" stroke="#111" stroke-width="2.2"/></g></g>
</svg>
<div id="title" class="a"></div>
<div id="ruler" class="a"></div>
<svg style="left:0;top:0" width="120" height="132"><!-- title icon --> <circle cx="102" cy="118.5" r="5.3" fill="#f4f4f4" stroke="#2c4a92" stroke-width="2.2"/> <path d="M99,116 L105,121 M100,120 L104,115" stroke="#c88" stroke-width="0.5"/> <line x1="102.5" y1="119" x2="107" y2="123.5" stroke="#f0a020" stroke-width="2.2"/> <circle cx="107.5" cy="124" r="1.3" fill="#e06060"/> </svg>
<div class="a" style="left:594px;top:113px;font-size:12px;line-height:15px;color:#1a1a1a">move_copy.dxf</div>
<svg style="left:0;top:0" width="1500" height="844">
<defs><clipPath id="hr"><rect x="95" y="132" width="1043" height="23"/></clipPath><clipPath id="vr"><rect x="72" y="155" width="23" height="577"/></clipPath></defs>
<g clip-path="url(#hr)">
<line x1="115.30000000000001" y1="148" x2="115.30000000000001" y2="155" stroke="#555" stroke-width="1"/>
<text x="114.9" y="142" font-size="10.2" text-anchor="middle" fill="#1a1a1a" letter-spacing="-0.4">-20</text>
<line x1="155.3" y1="148" x2="155.3" y2="155" stroke="#555" stroke-width="1"/>
<text x="154.9" y="142" font-size="10.2" text-anchor="middle" fill="#1a1a1a" letter-spacing="-0.4">-10</text>
<line x1="195.3" y1="148" x2="195.3" y2="155" stroke="#555" stroke-width="1"/>
<text x="194.9" y="142" font-size="10.2" text-anchor="middle" fill="#1a1a1a" letter-spacing="-0.4">0</text>
<line x1="235.3" y1="148" x2="235.3" y2="155" stroke="#555" stroke-width="1"/>
<text x="234.9" y="142" font-size="10.2" text-anchor="middle" fill="#1a1a1a" letter-spacing="-0.4">10</text>
<line x1="275.3" y1="148" x2="275.3" y2="155" stroke="#555" stroke-width="1"/>
<text x="274.90000000000003" y="142" font-size="10.2" text-anchor="middle" fill="#1a1a1a" letter-spacing="-0.4">20</text>
<line x1="315.3" y1="148" x2="315.3" y2="155" stroke="#555" stroke-width="1"/>
<text x="314.90000000000003" y="142" font-size="10.2" text-anchor="middle" fill="#1a1a1a" letter-spacing="-0.4">30</text>
<line x1="355.3" y1="148" x2="355.3" y2="155" stroke="#555" stroke-width="1"/>
<text x="354.90000000000003" y="142" font-size="10.2" text-anchor="middle" fill="#1a1a1a" letter-spacing="-0.4">40</text>
<line x1="395.3" y1="148" x2="395.3" y2="155" stroke="#555" stroke-width="1"/>
<text x="394.90000000000003" y="142" font-size="10.2" text-anchor="middle" fill="#1a1a1a" letter-spacing="-0.4">50</text>
<line x1="435.3" y1="148" x2="435.3" y2="155" stroke="#555" stroke-width="1"/>
<text x="434.90000000000003" y="142" font-size="10.2" text-anchor="middle" fill="#1a1a1a" letter-spacing="-0.4">60</text>
<line x1="475.3" y1="148" x2="475.3" y2="155" stroke="#555" stroke-width="1"/>
<text x="474.90000000000003" y="142" font-size="10.2" text-anchor="middle" fill="#1a1a1a" letter-spacing="-0.4">70</text>
<line x1="515.3" y1="148" x2="515.3" y2="155" stroke="#555" stroke-width="1"/>
<text x="514.9" y="142" font-size="10.2" text-anchor="middle" fill="#1a1a1a" letter-spacing="-0.4">80</text>
<line x1="555.3" y1="148" x2="555.3" y2="155" stroke="#555" stroke-width="1"/>
<text x="554.9" y="142" font-size="10.2" text-anchor="middle" fill="#1a1a1a" letter-spacing="-0.4">90</text>
<line x1="595.3" y1="148" x2="595.3" y2="155" stroke="#555" stroke-width="1"/>
<text x="594.9" y="142" font-size="10.2" text-anchor="middle" fill="#1a1a1a" letter-spacing="-0.4">100</text>
<line x1="635.3" y1="148" x2="635.3" y2="155" stroke="#555" stroke-width="1"/>
<text x="634.9" y="142" font-size="10.2" text-anchor="middle" fill="#1a1a1a" letter-spacing="-0.4">110</text>
<line x1="675.3" y1="148" x2="675.3" y2="155" stroke="#555" stroke-width="1"/>
<text x="674.9" y="142" font-size="10.2" text-anchor="middle" fill="#1a1a1a" letter-spacing="-0.4">120</text>
<line x1="715.3" y1="148" x2="715.3" y2="155" stroke="#555" stroke-width="1"/>
<text x="714.9" y="142" font-size="10.2" text-anchor="middle" fill="#1a1a1a" letter-spacing="-0.4">130</text>
<line x1="755.3" y1="148" x2="755.3" y2="155" stroke="#555" stroke-width="1"/>
<text x="754.9" y="142" font-size="10.2" text-anchor="middle" fill="#1a1a1a" letter-spacing="-0.4">140</text>
<line x1="795.3" y1="148" x2="795.3" y2="155" stroke="#555" stroke-width="1"/>
<text x="794.9" y="142" font-size="10.2" text-anchor="middle" fill="#1a1a1a" letter-spacing="-0.4">150</text>
<line x1="835.3" y1="148" x2="835.3" y2="155" stroke="#555" stroke-width="1"/>
<text x="834.9" y="142" font-size="10.2" text-anchor="middle" fill="#1a1a1a" letter-spacing="-0.4">160</text>
<line x1="875.3" y1="148" x2="875.3" y2="155" stroke="#555" stroke-width="1"/>
<text x="874.9" y="142" font-size="10.2" text-anchor="middle" fill="#1a1a1a" letter-spacing="-0.4">170</text>
<line x1="915.3" y1="148" x2="915.3" y2="155" stroke="#555" stroke-width="1"/>
<text x="914.9" y="142" font-size="10.2" text-anchor="middle" fill="#1a1a1a" letter-spacing="-0.4">180</text>
<line x1="955.3" y1="148" x2="955.3" y2="155" stroke="#555" stroke-width="1"/>
<text x="954.9" y="142" font-size="10.2" text-anchor="middle" fill="#1a1a1a" letter-spacing="-0.4">190</text>
<line x1="995.3" y1="148" x2="995.3" y2="155" stroke="#555" stroke-width="1"/>
<text x="994.9" y="142" font-size="10.2" text-anchor="middle" fill="#1a1a1a" letter-spacing="-0.4">200</text>
<line x1="1035.3" y1="148" x2="1035.3" y2="155" stroke="#555" stroke-width="1"/>
<text x="1034.8999999999999" y="142" font-size="10.2" text-anchor="middle" fill="#1a1a1a" letter-spacing="-0.4">210</text>
<line x1="1075.3" y1="148" x2="1075.3" y2="155" stroke="#555" stroke-width="1"/>
<text x="1074.8999999999999" y="142" font-size="10.2" text-anchor="middle" fill="#1a1a1a" letter-spacing="-0.4">220</text>
<line x1="1115.3" y1="148" x2="1115.3" y2="155" stroke="#555" stroke-width="1"/>
<text x="1114.8999999999999" y="142" font-size="10.2" text-anchor="middle" fill="#1a1a1a" letter-spacing="-0.4">230</text>
<line x1="1155.3" y1="148" x2="1155.3" y2="155" stroke="#555" stroke-width="1"/>
<text x="1154.8999999999999" y="142" font-size="10.2" text-anchor="middle" fill="#1a1a1a" letter-spacing="-0.4">240</text>
<path d="M509.5,144 L521.5,144 L515.5,152 Z" fill="#000"/>
</g><g clip-path="url(#vr)">
<line x1="88" y1="752.3" x2="95" y2="752.3" stroke="#555" stroke-width="1"/>
<text x="0" y="0" transform="translate(83,752.6999999999999) rotate(-90)" font-size="10.2" text-anchor="middle" fill="#1a1a1a" letter-spacing="-0.4">-30</text>
<line x1="88" y1="712.3" x2="95" y2="712.3" stroke="#555" stroke-width="1"/>
<text x="0" y="0" transform="translate(83,712.6999999999999) rotate(-90)" font-size="10.2" text-anchor="middle" fill="#1a1a1a" letter-spacing="-0.4">-20</text>
<line x1="88" y1="672.3" x2="95" y2="672.3" stroke="#555" stroke-width="1"/>
<text x="0" y="0" transform="translate(83,672.6999999999999) rotate(-90)" font-size="10.2" text-anchor="middle" fill="#1a1a1a" letter-spacing="-0.4">-10</text>
<line x1="88" y1="632.3" x2="95" y2="632.3" stroke="#555" stroke-width="1"/>
<text x="0" y="0" transform="translate(83,632.6999999999999) rotate(-90)" font-size="10.2" text-anchor="middle" fill="#1a1a1a" letter-spacing="-0.4">0</text>
<line x1="88" y1="592.3" x2="95" y2="592.3" stroke="#555" stroke-width="1"/>
<text x="0" y="0" transform="translate(83,592.6999999999999) rotate(-90)" font-size="10.2" text-anchor="middle" fill="#1a1a1a" letter-spacing="-0.4">10</text>
<line x1="88" y1="552.3" x2="95" y2="552.3" stroke="#555" stroke-width="1"/>
<text x="0" y="0" transform="translate(83,552.6999999999999) rotate(-90)" font-size="10.2" text-anchor="middle" fill="#1a1a1a" letter-spacing="-0.4">20</text>
<line x1="88" y1="512.3" x2="95" y2="512.3" stroke="#555" stroke-width="1"/>
<text x="0" y="0" transform="translate(83,512.6999999999999) rotate(-90)" font-size="10.2" text-anchor="middle" fill="#1a1a1a" letter-spacing="-0.4">30</text>
<line x1="88" y1="472.29999999999995" x2="95" y2="472.29999999999995" stroke="#555" stroke-width="1"/>
<text x="0" y="0" transform="translate(83,472.69999999999993) rotate(-90)" font-size="10.2" text-anchor="middle" fill="#1a1a1a" letter-spacing="-0.4">40</text>
<line x1="88" y1="432.29999999999995" x2="95" y2="432.29999999999995" stroke="#555" stroke-width="1"/>
<text x="0" y="0" transform="translate(83,432.69999999999993) rotate(-90)" font-size="10.2" text-anchor="middle" fill="#1a1a1a" letter-spacing="-0.4">50</text>
<line x1="88" y1="392.29999999999995" x2="95" y2="392.29999999999995" stroke="#555" stroke-width="1"/>
<text x="0" y="0" transform="translate(83,392.69999999999993) rotate(-90)" font-size="10.2" text-anchor="middle" fill="#1a1a1a" letter-spacing="-0.4">60</text>
<line x1="88" y1="352.29999999999995" x2="95" y2="352.29999999999995" stroke="#555" stroke-width="1"/>
<text x="0" y="0" transform="translate(83,352.69999999999993) rotate(-90)" font-size="10.2" text-anchor="middle" fill="#1a1a1a" letter-spacing="-0.4">70</text>
<line x1="88" y1="312.29999999999995" x2="95" y2="312.29999999999995" stroke="#555" stroke-width="1"/>
<text x="0" y="0" transform="translate(83,312.69999999999993) rotate(-90)" font-size="10.2" text-anchor="middle" fill="#1a1a1a" letter-spacing="-0.4">80</text>
<line x1="88" y1="272.29999999999995" x2="95" y2="272.29999999999995" stroke="#555" stroke-width="1"/>
<text x="0" y="0" transform="translate(83,272.69999999999993) rotate(-90)" font-size="10.2" text-anchor="middle" fill="#1a1a1a" letter-spacing="-0.4">90</text>
<line x1="88" y1="232.29999999999995" x2="95" y2="232.29999999999995" stroke="#555" stroke-width="1"/>
<text x="0" y="0" transform="translate(83,232.69999999999996) rotate(-90)" font-size="10.2" text-anchor="middle" fill="#1a1a1a" letter-spacing="-0.4">100</text>
<line x1="88" y1="192.29999999999995" x2="95" y2="192.29999999999995" stroke="#555" stroke-width="1"/>
<text x="0" y="0" transform="translate(83,192.69999999999996) rotate(-90)" font-size="10.2" text-anchor="middle" fill="#1a1a1a" letter-spacing="-0.4">110</text>
<line x1="88" y1="152.29999999999995" x2="95" y2="152.29999999999995" stroke="#555" stroke-width="1"/>
<text x="0" y="0" transform="translate(83,152.69999999999996) rotate(-90)" font-size="10.2" text-anchor="middle" fill="#1a1a1a" letter-spacing="-0.4">120</text>
<path d="M85,546 L85,558 L92,552 Z" fill="#000"/>
</g></svg>
<div id="canvas" class="a"></div>
<svg style="left:95px;top:155px" width="1043" height="577" viewBox="95 155 1043 577">
<rect x="95" y="155" width="1043" height="577" fill="#000"/>
<line x1="195.5" y1="155" x2="195.5" y2="732" stroke="#1a1a1a" stroke-width="1.5"/>
<line x1="595.5" y1="155" x2="595.5" y2="732" stroke="#1a1a1a" stroke-width="1.5"/>
<line x1="995.5" y1="155" x2="995.5" y2="732" stroke="#1a1a1a" stroke-width="1.5"/>
<line x1="95" y1="232.5" x2="1138" y2="232.5" stroke="#1a1a1a" stroke-width="1.5"/>
<line x1="95" y1="632.5" x2="1138" y2="632.5" stroke="#1a1a1a" stroke-width="1.5"/>
<path d="M115,712h1v1h-1zM115,672h1v1h-1zM115,632h1v1h-1zM115,592h1v1h-1zM115,552h1v1h-1zM115,512h1v1h-1zM115,472h1v1h-1zM115,432h1v1h-1zM115,392h1v1h-1zM115,352h1v1h-1zM115,312h1v1h-1zM115,272h1v1h-1zM115,232h1v1h-1zM115,192h1v1h-1zM155,712h1v1h-1zM155,672h1v1h-1zM155,632h1v1h-1zM155,592h1v1h-1zM155,552h1v1h-1zM155,512h1v1h-1zM155,472h1v1h-1zM155,432h1v1h-1zM155,392h1v1h-1zM155,352h1v1h-1zM155,312h1v1h-1zM155,272h1v1h-1zM155,232h1v1h-1zM155,192h1v1h-1zM195,712h1v1h-1zM195,672h1v1h-1zM195,632h1v1h-1zM195,592h1v1h-1zM195,552h1v1h-1zM195,512h1v1h-1zM195,472h1v1h-1zM195,432h1v1h-1zM195,392h1v1h-1zM195,352h1v1h-1zM195,312h1v1h-1zM195,272h1v1h-1zM195,232h1v1h-1zM195,192h1v1h-1zM235,712h1v1h-1zM235,672h1v1h-1zM235,632h1v1h-1zM235,592h1v1h-1zM235,552h1v1h-1zM235,512h1v1h-1zM235,472h1v1h-1zM235,432h1v1h-1zM235,392h1v1h-1zM235,352h1v1h-1zM235,312h1v1h-1zM235,272h1v1h-1zM235,232h1v1h-1zM235,192h1v1h-1zM275,712h1v1h-1zM275,672h1v1h-1zM275,632h1v1h-1zM275,592h1v1h-1zM275,552h1v1h-1zM275,512h1v1h-1zM275,472h1v1h-1zM275,432h1v1h-1zM275,392h1v1h-1zM275,352h1v1h-1zM275,312h1v1h-1zM275,272h1v1h-1zM275,232h1v1h-1zM275,192h1v1h-1zM315,712h1v1h-1zM315,672h1v1h-1zM315,632h1v1h-1zM315,592h1v1h-1zM315,552h1v1h-1zM315,512h1v1h-1zM315,472h1v1h-1zM315,432h1v1h-1zM315,392h1v1h-1zM315,352h1v1h-1zM315,312h1v1h-1zM315,272h1v1h-1zM315,232h1v1h-1zM315,192h1v1h-1zM355,712h1v1h-1zM355,672h1v1h-1zM355,632h1v1h-1zM355,592h1v1h-1zM355,552h1v1h-1zM355,512h1v1h-1zM355,472h1v1h-1zM355,432h1v1h-1zM355,392h1v1h-1zM355,352h1v1h-1zM355,312h1v1h-1zM355,272h1v1h-1zM355,232h1v1h-1zM355,192h1v1h-1zM395,712h1v1h-1zM395,672h1v1h-1zM395,632h1v1h-1zM395,592h1v1h-1zM395,552h1v1h-1zM395,512h1v1h-1zM395,472h1v1h-1zM395,432h1v1h-1zM395,392h1v1h-1zM395,352h1v1h-1zM395,312h1v1h-1zM395,272h1v1h-1zM395,232h1v1h-1zM395,192h1v1h-1zM435,712h1v1h-1zM435,672h1v1h-1zM435,632h1v1h-1zM435,592h1v1h-1zM435,552h1v1h-1zM435,512h1v1h-1zM435,472h1v1h-1zM435,432h1v1h-1zM435,392h1v1h-1zM435,352h1v1h-1zM435,312h1v1h-1zM435,272h1v1h-1zM435,232h1v1h-1zM435,192h1v1h-1zM475,712h1v1h-1zM475,672h1v1h-1zM475,632h1v1h-1zM475,592h1v1h-1zM475,552h1v1h-1zM475,512h1v1h-1zM475,472h1v1h-1zM475,432h1v1h-1zM475,392h1v1h-1zM475,352h1v1h-1zM475,312h1v1h-1zM475,272h1v1h-1zM475,232h1v1h-1zM475,192h1v1h-1zM515,712h1v1h-1zM515,672h1v1h-1zM515,632h1v1h-1zM515,592h1v1h-1zM515,552h1v1h-1zM515,512h1v1h-1zM515,472h1v1h-1zM515,432h1v1h-1zM515,392h1v1h-1zM515,352h1v1h-1zM515,312h1v1h-1zM515,272h1v1h-1zM515,232h1v1h-1zM515,192h1v1h-1zM555,712h1v1h-1zM555,672h1v1h-1zM555,632h1v1h-1zM555,592h1v1h-1zM555,552h1v1h-1zM555,512h1v1h-1zM555,472h1v1h-1zM555,432h1v1h-1zM555,392h1v1h-1zM555,352h1v1h-1zM555,312h1v1h-1zM555,272h1v1h-1zM555,232h1v1h-1zM555,192h1v1h-1zM595,712h1v1h-1zM595,672h1v1h-1zM595,632h1v1h-1zM595,592h1v1h-1zM595,552h1v1h-1zM595,512h1v1h-1zM595,472h1v1h-1zM595,432h1v1h-1zM595,392h1v1h-1zM595,352h1v1h-1zM595,312h1v1h-1zM595,272h1v1h-1zM595,232h1v1h-1zM595,192h1v1h-1zM635,712h1v1h-1zM635,672h1v1h-1zM635,632h1v1h-1zM635,592h1v1h-1zM635,552h1v1h-1zM635,512h1v1h-1zM635,472h1v1h-1zM635,432h1v1h-1zM635,392h1v1h-1zM635,352h1v1h-1zM635,312h1v1h-1zM635,272h1v1h-1zM635,232h1v1h-1zM635,192h1v1h-1zM675,712h1v1h-1zM675,672h1v1h-1zM675,632h1v1h-1zM675,592h1v1h-1zM675,552h1v1h-1zM675,512h1v1h-1zM675,472h1v1h-1zM675,432h1v1h-1zM675,392h1v1h-1zM675,352h1v1h-1zM675,312h1v1h-1zM675,272h1v1h-1zM675,232h1v1h-1zM675,192h1v1h-1zM715,712h1v1h-1zM715,672h1v1h-1zM715,632h1v1h-1zM715,592h1v1h-1zM715,552h1v1h-1zM715,512h1v1h-1zM715,472h1v1h-1zM715,432h1v1h-1zM715,392h1v1h-1zM715,352h1v1h-1zM715,312h1v1h-1zM715,272h1v1h-1zM715,232h1v1h-1zM715,192h1v1h-1zM755,712h1v1h-1zM755,672h1v1h-1zM755,632h1v1h-1zM755,592h1v1h-1zM755,552h1v1h-1zM755,512h1v1h-1zM755,472h1v1h-1zM755,432h1v1h-1zM755,392h1v1h-1zM755,352h1v1h-1zM755,312h1v1h-1zM755,272h1v1h-1zM755,232h1v1h-1zM755,192h1v1h-1zM795,712h1v1h-1zM795,672h1v1h-1zM795,632h1v1h-1zM795,592h1v1h-1zM795,552h1v1h-1zM795,512h1v1h-1zM795,472h1v1h-1zM795,432h1v1h-1zM795,392h1v1h-1zM795,352h1v1h-1zM795,312h1v1h-1zM795,272h1v1h-1zM795,232h1v1h-1zM795,192h1v1h-1zM835,712h1v1h-1zM835,672h1v1h-1zM835,632h1v1h-1zM835,592h1v1h-1zM835,552h1v1h-1zM835,512h1v1h-1zM835,472h1v1h-1zM835,432h1v1h-1zM835,392h1v1h-1zM835,352h1v1h-1zM835,312h1v1h-1zM835,272h1v1h-1zM835,232h1v1h-1zM835,192h1v1h-1zM875,712h1v1h-1zM875,672h1v1h-1zM875,632h1v1h-1zM875,592h1v1h-1zM875,552h1v1h-1zM875,512h1v1h-1zM875,472h1v1h-1zM875,432h1v1h-1zM875,392h1v1h-1zM875,352h1v1h-1zM875,312h1v1h-1zM875,272h1v1h-1zM875,232h1v1h-1zM875,192h1v1h-1zM915,712h1v1h-1zM915,672h1v1h-1zM915,632h1v1h-1zM915,592h1v1h-1zM915,552h1v1h-1zM915,512h1v1h-1zM915,472h1v1h-1zM915,432h1v1h-1zM915,392h1v1h-1zM915,352h1v1h-1zM915,312h1v1h-1zM915,272h1v1h-1zM915,232h1v1h-1zM915,192h1v1h-1zM955,712h1v1h-1zM955,672h1v1h-1zM955,632h1v1h-1zM955,592h1v1h-1zM955,552h1v1h-1zM955,512h1v1h-1zM955,472h1v1h-1zM955,432h1v1h-1zM955,392h1v1h-1zM955,352h1v1h-1zM955,312h1v1h-1zM955,272h1v1h-1zM955,232h1v1h-1zM955,192h1v1h-1zM995,712h1v1h-1zM995,672h1v1h-1zM995,632h1v1h-1zM995,592h1v1h-1zM995,552h1v1h-1zM995,512h1v1h-1zM995,472h1v1h-1zM995,432h1v1h-1zM995,392h1v1h-1zM995,352h1v1h-1zM995,312h1v1h-1zM995,272h1v1h-1zM995,232h1v1h-1zM995,192h1v1h-1zM1035,712h1v1h-1zM1035,672h1v1h-1zM1035,632h1v1h-1zM1035,592h1v1h-1zM1035,552h1v1h-1zM1035,512h1v1h-1zM1035,472h1v1h-1zM1035,432h1v1h-1zM1035,392h1v1h-1zM1035,352h1v1h-1zM1035,312h1v1h-1zM1035,272h1v1h-1zM1035,232h1v1h-1zM1035,192h1v1h-1zM1075,712h1v1h-1zM1075,672h1v1h-1zM1075,632h1v1h-1zM1075,592h1v1h-1zM1075,552h1v1h-1zM1075,512h1v1h-1zM1075,472h1v1h-1zM1075,432h1v1h-1zM1075,392h1v1h-1zM1075,352h1v1h-1zM1075,312h1v1h-1zM1075,272h1v1h-1zM1075,232h1v1h-1zM1075,192h1v1h-1zM1115,712h1v1h-1zM1115,672h1v1h-1zM1115,632h1v1h-1zM1115,592h1v1h-1zM1115,552h1v1h-1zM1115,512h1v1h-1zM1115,472h1v1h-1zM1115,432h1v1h-1zM1115,392h1v1h-1zM1115,352h1v1h-1zM1115,312h1v1h-1zM1115,272h1v1h-1zM1115,232h1v1h-1zM1115,192h1v1h-1z" fill="#3e3e3e"/>
<line x1="515.5" y1="155" x2="515.5" y2="732" stroke="#6b5510" stroke-width="1.6" stroke-dasharray="4.5,1.5"/>
<line x1="95" y1="552.5" x2="1138" y2="552.5" stroke="#6b5510" stroke-width="1.6" stroke-dasharray="4.5,1.5"/>
<path d="M195,632 L195,519.7 L276,519.7 L386,588 L386,632 Z" fill="none" stroke="#5c2a26" stroke-width="1.6"/>
<path d="M199.4,627.2 L199.4,524.4 L266,524.4 L372,589 L372,627.2 Z" fill="none" stroke="#5c2a26" stroke-width="1"/>
<circle cx="259" cy="556" r="12" fill="none" stroke="#8a3530" stroke-width="1.2"/>
<circle cx="323" cy="596" r="12" fill="none" stroke="#8a3530" stroke-width="1.2"/>
<line x1="180" y1="632" x2="195" y2="632" stroke="#7a0000" stroke-width="1.5"/>
<line x1="195" y1="632" x2="195" y2="652" stroke="#7a0000" stroke-width="1.5"/>
<g stroke="#a00000" fill="none" stroke-width="1"><circle cx="275" cy="592" r="5"/><line x1="269" y1="592" x2="281" y2="592"/><line x1="275" y1="586" x2="275" y2="598"/></g>
<rect x="206" y="511" width="10" height="10" fill="#0000b4" stroke="rgba(210,210,230,0.45)" stroke-width="0.8"/>
<rect x="195" y="520" width="10" height="10" fill="#0b8ab8" stroke="rgba(210,210,230,0.45)" stroke-width="0.8"/>
<rect x="206" y="520" width="10" height="10" fill="#0000b4" stroke="rgba(210,210,230,0.45)" stroke-width="0.8"/>
<rect x="198" y="523" width="10" height="10" fill="#0b8ab8" stroke="rgba(210,210,230,0.45)" stroke-width="0.8"/>
<rect x="186" y="531" width="10" height="10" fill="#c4002a" stroke="rgba(210,210,230,0.45)" stroke-width="0.8"/>
<rect x="195" y="531" width="10" height="10" fill="#0000b4" stroke="rgba(210,210,230,0.45)" stroke-width="0.8"/>
<rect x="210" y="531" width="10" height="10" fill="#0b8ab8" stroke="rgba(210,210,230,0.45)" stroke-width="0.8"/>
<rect x="206" y="530" width="10" height="10" fill="#0b8ab8" stroke="rgba(210,210,230,0.45)" stroke-width="0.8"/>
<rect x="206" y="536" width="10" height="10" fill="#0b8ab8" stroke="rgba(210,210,230,0.45)" stroke-width="0.8"/>
<rect x="226" y="531" width="10" height="10" fill="#0000b4" stroke="rgba(210,210,230,0.45)" stroke-width="0.8"/>
<rect x="234" y="520" width="10" height="10" fill="#0b8ab8" stroke="rgba(210,210,230,0.45)" stroke-width="0.8"/>
<rect x="262" y="515" width="10" height="5" fill="#0000b4" stroke="rgba(210,210,230,0.45)" stroke-width="0.8"/>
<rect x="271" y="516" width="5" height="6" fill="#0b8ab8" stroke="rgba(210,210,230,0.45)" stroke-width="0.8"/>
<rect x="276" y="517" width="4" height="10" fill="#c4002a" stroke="rgba(210,210,230,0.45)" stroke-width="0.8"/>
<rect x="262" y="519" width="15" height="12" fill="#0000b4" stroke="rgba(210,210,230,0.45)" stroke-width="0.8"/>
<rect x="265" y="521" width="9" height="9" fill="#0b8ab8" stroke="rgba(210,210,230,0.45)" stroke-width="0.8"/>
<rect x="254" y="530" width="10" height="10" fill="#0000b4" stroke="rgba(210,210,230,0.45)" stroke-width="0.8"/>
<circle cx="266" cy="536" r="5" fill="#0000b4" stroke="rgba(210,210,230,0.45)" stroke-width="0.8"/>
<rect x="254" y="540" width="10" height="9" fill="#0b8ab8" stroke="rgba(210,210,230,0.45)" stroke-width="0.8"/>
<rect x="233" y="551" width="10" height="10" fill="#c4002a" stroke="rgba(210,210,230,0.45)" stroke-width="0.8"/>
<rect x="243" y="551" width="8" height="10" fill="#0b8ab8" stroke="rgba(210,210,230,0.45)" stroke-width="0.8"/>
<circle cx="259" cy="556" r="5" fill="#0000b4" stroke="rgba(210,210,230,0.45)" stroke-width="0.8"/>
<rect x="267" y="551" width="8" height="10" fill="#0b8ab8" stroke="rgba(210,210,230,0.45)" stroke-width="0.8"/>
<rect x="275" y="551" width="10" height="10" fill="#0000b4" stroke="rgba(210,210,230,0.45)" stroke-width="0.8"/>
<rect x="254" y="564" width="10" height="8" fill="#0b8ab8" stroke="rgba(210,210,230,0.45)" stroke-width="0.8"/>
<rect x="254" y="572" width="10" height="10" fill="#c4002a" stroke="rgba(210,210,230,0.45)" stroke-width="0.8"/>
<rect x="206" y="551" width="10" height="10" fill="#c4002a" stroke="rgba(210,210,230,0.45)" stroke-width="0.8"/>
<rect x="195" y="571" width="10" height="10" fill="#0b8ab8" stroke="rgba(210,210,230,0.45)" stroke-width="0.8"/>
<rect x="206" y="591" width="10" height="10" fill="#0000b4" stroke="rgba(210,210,230,0.45)" stroke-width="0.8"/>
<rect x="206" y="607" width="10" height="10" fill="#0b8ab8" stroke="rgba(210,210,230,0.45)" stroke-width="0.8"/>
<rect x="186" y="611" width="10" height="10" fill="#c4002a" stroke="rgba(210,210,230,0.45)" stroke-width="0.8"/>
<rect x="195" y="611" width="10" height="10" fill="#0000b4" stroke="rgba(210,210,230,0.45)" stroke-width="0.8"/>
<rect x="205" y="611" width="15" height="10" fill="#0b8ab8" stroke="rgba(210,210,230,0.45)" stroke-width="0.8"/>
<rect x="226" y="611" width="10" height="10" fill="#0000b4" stroke="rgba(210,210,230,0.45)" stroke-width="0.8"/>
<rect x="198" y="619" width="10" height="10" fill="#0b8ab8" stroke="rgba(210,210,230,0.45)" stroke-width="0.8"/>
<rect x="195" y="622" width="10" height="10" fill="#0b8ab8" stroke="rgba(210,210,230,0.45)" stroke-width="0.8"/>
<rect x="206" y="622" width="10" height="10" fill="#0000b4" stroke="rgba(210,210,230,0.45)" stroke-width="0.8"/>
<rect x="206" y="632" width="10" height="9" fill="#c4002a" stroke="rgba(210,210,230,0.45)" stroke-width="0.8"/>
<rect x="286" y="622" width="10" height="10" fill="#0b8ab8" stroke="rgba(210,210,230,0.45)" stroke-width="0.8"/>
<rect x="319" y="554" width="10" height="10" fill="#0b8ab8" stroke="rgba(210,210,230,0.45)" stroke-width="0.8"/>
<rect x="318" y="570" width="10" height="10" fill="#0000b4" stroke="rgba(210,210,230,0.45)" stroke-width="0.8"/>
<rect x="318" y="580" width="10" height="8" fill="#0b8ab8" stroke="rgba(210,210,230,0.45)" stroke-width="0.8"/>
<rect x="297" y="591" width="10" height="10" fill="#c4002a" stroke="rgba(210,210,230,0.45)" stroke-width="0.8"/>
<rect x="307" y="591" width="8" height="10" fill="#0b8ab8" stroke="rgba(210,210,230,0.45)" stroke-width="0.8"/>
<circle cx="323" cy="596" r="5" fill="#0000b4" stroke="rgba(210,210,230,0.45)" stroke-width="0.8"/>
<rect x="331" y="591" width="8" height="10" fill="#0b8ab8" stroke="rgba(210,210,230,0.45)" stroke-width="0.8"/>
<rect x="339" y="591" width="10" height="10" fill="#0000b4" stroke="rgba(210,210,230,0.45)" stroke-width="0.8"/>
<rect x="318" y="604" width="10" height="8" fill="#0b8ab8" stroke="rgba(210,210,230,0.45)" stroke-width="0.8"/>
<rect x="318" y="612" width="10" height="10" fill="#c4002a" stroke="rgba(210,210,230,0.45)" stroke-width="0.8"/>
<rect x="346" y="611" width="10" height="10" fill="#c4002a" stroke="rgba(210,210,230,0.45)" stroke-width="0.8"/>
<rect x="375" y="582" width="10" height="10" fill="#c4002a" stroke="rgba(210,210,230,0.45)" stroke-width="0.8"/>
<rect x="366" y="591" width="10" height="10" fill="#0000b4" stroke="rgba(210,210,230,0.45)" stroke-width="0.8"/>
<rect x="381" y="589" width="10" height="10" fill="#0b8ab8" stroke="rgba(210,210,230,0.45)" stroke-width="0.8"/>
<rect x="372" y="587" width="10" height="10" fill="#c4002a" stroke="rgba(210,210,230,0.45)" stroke-width="0.8"/>
<circle cx="371" cy="601" r="5" fill="#0000b4" stroke="rgba(210,210,230,0.45)" stroke-width="0.8"/>
<rect x="386" y="597" width="6" height="10" fill="#0000b4" stroke="rgba(210,210,230,0.45)" stroke-width="0.8"/>
<rect x="377" y="604" width="10" height="10" fill="#0b8ab8" stroke="rgba(210,210,230,0.45)" stroke-width="0.8"/>
<rect x="362" y="607" width="14" height="13" fill="#0b8ab8" stroke="rgba(210,210,230,0.45)" stroke-width="0.8"/>
<rect x="377" y="614" width="10" height="8" fill="#0000b4" stroke="rgba(210,210,230,0.45)" stroke-width="0.8"/>
<rect x="387" y="611" width="9" height="10" fill="#0000b4" stroke="rgba(210,210,230,0.45)" stroke-width="0.8"/>
<rect x="374" y="619" width="10" height="10" fill="#0b8ab8" stroke="rgba(210,210,230,0.45)" stroke-width="0.8"/>
<rect x="366" y="623" width="10" height="10" fill="#0000b4" stroke="rgba(210,210,230,0.45)" stroke-width="0.8"/>
<rect x="377" y="623" width="10" height="10" fill="#0b8ab8" stroke="rgba(210,210,230,0.45)" stroke-width="0.8"/>
<rect x="366" y="632" width="10" height="9" fill="#c4002a" stroke="rgba(210,210,230,0.45)" stroke-width="0.8"/>
</svg>
<div id="vscroll" class="a"></div>
<div class="a" style="left:1143px;top:183px;width:8px;height:357px;border-radius:4px;background:#8c8c8c"></div>
<div id="below" class="a"></div>
<div class="a" style="left:1083px;top:733px;width:71px;height:15px;background:#ebebeb"></div>
<div class="a" style="left:1000px;top:734px;width:153px;text-align:right;font-size:12.7px;line-height:15px;color:#111">10 &lt; 100</div>
<div id="cmdhist" class="a"></div>
<div class="a" style="left:77px;top:750px;font-size:13.6px;line-height:17px;color:#1010cc;white-space:nowrap"><i>Opdracht:</i> move</div>
<div id="cmdline" class="a"></div>
<div class="a" style="left:73px;top:778px;font-size:13.5px;line-height:16px;color:#111;white-space:nowrap">Bestemmingspunt:</div>
<div class="a" style="left:189px;top:776px;width:938px;height:18px;background:#fff"></div>
<div class="a" style="left:1127px;top:772px;width:26px;height:26px;background:linear-gradient(#f0f0f0,#e6e6e6);border:1px solid #a9a9a9"></div>
<svg style="left:0;top:0" width="1160" height="800">
<rect x="1133.5" y="780.5" width="14" height="10" fill="#fff" stroke="#444" stroke-width="1"/>
<rect x="1133" y="780" width="15" height="2.5" fill="#111"/>
<rect x="1145" y="780.6" width="1" height="1" fill="#fff"/>
</svg>

<div id="dock" class="a"></div>
<div class="a" style="left:1156px;top:108px;width:298px;height:22px;background:linear-gradient(#ededed,#dcdcdc)"></div>
<div class="a" style="left:1156px;top:112px;width:298px;text-align:center;font-size:12px;line-height:15px;color:#222;padding-left:36px">Lagenlijst</div>
<div class="a" style="left:1156px;top:130px;width:298px;height:27px;background:#a8a8a8"></div>
<div class="a" style="left:1157px;top:131px;width:58px;height:25px;background:linear-gradient(#e9e9e9,#f7f7f7)"></div>
<div class="a" style="left:1216px;top:131px;width:58px;height:25px;background:linear-gradient(#e9e9e9,#f7f7f7)"></div>
<div class="a" style="left:1275px;top:131px;width:58px;height:25px;background:linear-gradient(#e9e9e9,#f7f7f7)"></div>
<div class="a" style="left:1334px;top:131px;width:59px;height:25px;background:linear-gradient(#e9e9e9,#f7f7f7)"></div>
<div class="a" style="left:1394px;top:131px;width:59px;height:25px;background:linear-gradient(#e9e9e9,#f7f7f7)"></div>
<div class="a" style="left:1156px;top:157px;width:298px;height:641px;background:#fff"></div>
<div class="a" style="left:1183px;top:159px;font-size:13.3px;line-height:16px;color:#111">0</div>
<div class="a" style="left:1183px;top:179px;font-size:13.3px;line-height:16px;color:#111">Centrum</div>
<div class="a" style="left:1183px;top:199px;font-size:13.3px;line-height:16px;color:#111">Dun</div>
<div class="a" style="left:1183px;top:219px;font-size:13.3px;line-height:16px;color:#111">Zichtbaar</div>
<svg style="left:0;top:0" width="1460" height="800">
<circle cx="1164" cy="118" r="7" fill="#6d6d6d"/>
<path d="M1161,115 L1167,121 M1167,115 L1161,121" stroke="#fff" stroke-width="1.8"/>
<circle cx="1182" cy="118" r="7" fill="#6d6d6d"/>
<rect x="1178.5" y="117" width="5" height="4" fill="none" stroke="#fff" stroke-width="1"/>
<path d="M1180.5,117 V114.5 H1185.5 V118.5 H1183.5" fill="none" stroke="#fff" stroke-width="1"/>
<g transform="translate(1185,143)"><path d="M-8,0.5 Q0,-9 8,0.5 Q0,9 -8,0.5 Z" fill="#000"/><path d="M-5.5,0.5 Q0,-5 5.5,0.5 Q0,5.5 -5.5,0.5 Z" fill="#fff"/><circle cx="0" cy="0.5" r="2.8" fill="#000"/><circle cx="-0.9" cy="-0.6" r="0.9" fill="#fff"/></g>
<g opacity="0.3"><g transform="translate(1244,143)"><path d="M-8,0.5 Q0,-9 8,0.5 Q0,9 -8,0.5 Z" fill="#000"/><path d="M-5.5,0.5 Q0,-5 5.5,0.5 Q0,5.5 -5.5,0.5 Z" fill="#fff"/><circle cx="0" cy="0.5" r="2.8" fill="#000"/><circle cx="-0.9" cy="-0.6" r="0.9" fill="#fff"/></g></g>
<path d="M1298,142.5 h13 M1304.5,136 v13" stroke="#e00000" stroke-width="3"/>
<path d="M1357.5,143 h13" stroke="#e00000" stroke-width="3"/>
<g transform="translate(1424,143)"><path d="M-5,5.5 L-4,2 L4,-6 L6,-4 L-2,4 Z" fill="#e3a73a" stroke="#8a5a10" stroke-width="0.7"/><path d="M4,-6 L5,-7 L7,-5 L6,-4 Z" fill="#e02020"/><path d="M-5,5.5 L-4.5,3.8 L-3.3,5 Z" fill="#333"/></g>
<rect x="1161.5" y="163.5" width="15" height="8" fill="#fff" stroke="#000" stroke-width="1"/>
<rect x="1161" y="183" width="16" height="9" fill="#f00000"/><rect x="1161.5" y="183.5" width="15" height="8" fill="none" stroke="#000" stroke-width="0.6" opacity="0.4"/>
<rect x="1161" y="203" width="16" height="9" fill="#000"/>
<rect x="1161" y="223" width="16" height="9" fill="#000"/>
<g transform="translate(1423,167)"><path d="M-8,0.5 Q0,-9 8,0.5 Q0,9 -8,0.5 Z" fill="#000"/><path d="M-5.5,0.5 Q0,-5 5.5,0.5 Q0,5.5 -5.5,0.5 Z" fill="#fff"/><circle cx="0" cy="0.5" r="2.8" fill="#000"/><circle cx="-0.9" cy="-0.6" r="0.9" fill="#fff"/></g><g transform="translate(1423,187)"><path d="M-8,0.5 Q0,-9 8,0.5 Q0,9 -8,0.5 Z" fill="#000"/><path d="M-5.5,0.5 Q0,-5 5.5,0.5 Q0,5.5 -5.5,0.5 Z" fill="#fff"/><circle cx="0" cy="0.5" r="2.8" fill="#000"/><circle cx="-0.9" cy="-0.6" r="0.9" fill="#fff"/></g><g transform="translate(1423,207)"><path d="M-8,0.5 Q0,-9 8,0.5 Q0,9 -8,0.5 Z" fill="#000"/><path d="M-5.5,0.5 Q0,-5 5.5,0.5 Q0,5.5 -5.5,0.5 Z" fill="#fff"/><circle cx="0" cy="0.5" r="2.8" fill="#000"/><circle cx="-0.9" cy="-0.6" r="0.9" fill="#fff"/></g><g transform="translate(1423,227)"><path d="M-8,0.5 Q0,-9 8,0.5 Q0,9 -8,0.5 Z" fill="#000"/><path d="M-5.5,0.5 Q0,-5 5.5,0.5 Q0,5.5 -5.5,0.5 Z" fill="#fff"/><circle cx="0" cy="0.5" r="2.8" fill="#000"/><circle cx="-0.9" cy="-0.6" r="0.9" fill="#fff"/></g>
<g transform="translate(1445,166)"><path d="M-3.6,1 V-2.5 Q-3.6,-6.2 0,-6.2 Q3.6,-6.2 3.6,-2.5 V1" fill="none" stroke="#bcbcbc" stroke-width="1.6"/><rect x="-5.2" y="0.5" width="10.4" height="7.5" rx="0.8" fill="#bcbcbc"/></g><g transform="translate(1445,186)"><path d="M-3.6,1 V-2.5 Q-3.6,-6.2 0,-6.2 Q3.6,-6.2 3.6,-2.5 V1" fill="none" stroke="#bcbcbc" stroke-width="1.6"/><rect x="-5.2" y="0.5" width="10.4" height="7.5" rx="0.8" fill="#bcbcbc"/></g><g transform="translate(1445,206)"><path d="M-3.6,1 V-2.5 Q-3.6,-6.2 0,-6.2 Q3.6,-6.2 3.6,-2.5 V1" fill="none" stroke="#bcbcbc" stroke-width="1.6"/><rect x="-5.2" y="0.5" width="10.4" height="7.5" rx="0.8" fill="#bcbcbc"/></g><g transform="translate(1445,226)"><path d="M-3.6,1 V-2.5 Q-3.6,-6.2 0,-6.2 Q3.6,-6.2 3.6,-2.5 V1" fill="none" stroke="#bcbcbc" stroke-width="1.6"/><rect x="-5.2" y="0.5" width="10.4" height="7.5" rx="0.8" fill="#bcbcbc"/></g>
<g transform="translate(1400,227)"><path d="M-5,5.5 L-4,2 L4,-6 L6,-4 L-2,4 Z" fill="#e3a73a" stroke="#8a5a10" stroke-width="0.7"/><path d="M4,-6 L5,-7 L7,-5 L6,-4 Z" fill="#e02020"/><path d="M-5,5.5 L-4.5,3.8 L-3.3,5 Z" fill="#333"/></g>
</svg>

<div id="rdock" class="a"></div>
<svg style="left:0;top:0" width="1500" height="844">
<line x1="1455.5" y1="107" x2="1455.5" y2="799" stroke="#f4f4f4" stroke-width="1"/>
<g fill="#9a9a9a"><rect x="1463" y="116" width="2" height="2"/><rect x="1469" y="116" width="2" height="2"/><rect x="1475" y="116" width="2" height="2"/><rect x="1481" y="116" width="2" height="2"/><rect x="1487" y="116" width="2" height="2"/></g>
<rect x="1456" y="120.5" width="42.5" height="42" rx="6" fill="#b6b6b6"/>
<rect x="1456" y="418" width="42.5" height="40.5" rx="6" fill="#b6b6b6"/>
<line x1="1457" y1="261.5" x2="1499" y2="261.5" stroke="#777" stroke-width="1" stroke-dasharray="1,2"/>
<line x1="1457" y1="408.5" x2="1499" y2="408.5" stroke="#777" stroke-width="1" stroke-dasharray="1,2"/>
<rect x="1463.8" y="127.8" width="26.5" height="26.5" fill="#fff" stroke="#222" stroke-width="1"/>
<rect x="1463.3" y="127.3" width="27.5" height="4.5" fill="#000"/>
<rect x="1464.5" y="128.5" width="3" height="3" fill="#fff"/>
<path d="M1469.05,139.8 L1479.05,135.8 L1479.05,146.8 L1469.05,149.8 Z" fill="#999" stroke="#444" stroke-width="0.7"/>
<path d="M1472.05,138.8 L1484.05,134.8 L1484.05,145.8 L1472.05,149.8 Z" fill="#fafafa" stroke="#555" stroke-width="0.7"/>
<path d="M1476.05,145.8 L1481.05,137.8 L1481.05,144.8 Z" fill="none" stroke="#e33" stroke-width="0.8"/>
<rect x="1463.8" y="174.9" width="26.5" height="26.5" fill="#fff" stroke="#222" stroke-width="1"/>
<rect x="1463.3" y="174.4" width="27.5" height="4.5" fill="#000"/>
<rect x="1464.5" y="175.6" width="3" height="3" fill="#fff"/>
<rect x="1469.05" y="183.9" width="12" height="9" fill="#f7eeb8" stroke="#777" stroke-width="0.7"/>
<circle cx="1479.05" cy="191.9" r="5" fill="#f7eeb8" stroke="#777" stroke-width="0.7"/>
<rect x="1463.8" y="220.8" width="26.5" height="26.5" fill="#fff" stroke="#222" stroke-width="1"/>
<rect x="1463.3" y="220.3" width="27.5" height="4.5" fill="#000"/>
<rect x="1464.5" y="221.5" width="3" height="3" fill="#fff"/>
<rect x="1469.05" y="230.3" width="16" height="11" rx="2" fill="#f6f6f6" stroke="#c8d4ec" stroke-width="1"/>
<rect x="1463.8" y="276.5" width="26.5" height="26.5" fill="#fff" stroke="#222" stroke-width="1"/>
<rect x="1463.3" y="276" width="27.5" height="4.5" fill="#000"/>
<rect x="1464.5" y="277.2" width="3" height="3" fill="#fff"/>
<rect x="1468.05" y="285.5" width="3" height="3" fill="#000"/><rect x="1473.05" y="285.0" width="12" height="3.5" fill="none" stroke="#333" stroke-width="0.6"/>
<rect x="1468.05" y="290.5" width="3" height="3" fill="#000"/><rect x="1473.05" y="290.0" width="12" height="3.5" fill="none" stroke="#333" stroke-width="0.6"/>
<rect x="1468.05" y="295.5" width="3" height="3" fill="#000"/><rect x="1473.05" y="295.0" width="12" height="3.5" fill="none" stroke="#333" stroke-width="0.6"/>
<rect x="1463.8" y="321.5" width="26.5" height="26.5" fill="#fff" stroke="#222" stroke-width="1"/>
<rect x="1463.3" y="321" width="27.5" height="4.5" fill="#000"/>
<rect x="1464.5" y="322.2" width="3" height="3" fill="#fff"/>
<path d="M1470.05,330.5 L1484.05,330.5 L1478.55,337.5 L1478.55,344.5 L1475.55,342.5 L1475.55,337.5 Z" fill="#8a8a8a" stroke="#555" stroke-width="0.6"/>
<ellipse cx="1477.05" cy="330.5" rx="7" ry="1.5" fill="#bbb"/>
<rect x="1463.8" y="368.5" width="26.5" height="26.5" fill="#fff" stroke="#222" stroke-width="1"/>
<rect x="1463.3" y="368" width="27.5" height="4.5" fill="#000"/>
<rect x="1464.5" y="369.2" width="3" height="3" fill="#fff"/>
<path d="M1470.05,377.5 L1474.05,380.5 L1483.05,380.5 L1483.05,387.5 L1474.05,387.5 L1470.05,390.5 Z" fill="#eee" stroke="#444" stroke-width="0.8"/><rect x="1475.05" y="380.5" width="8" height="7" fill="#999"/><line x1="1467.05" y1="383.5" x2="1487.05" y2="383.5" stroke="#f88" stroke-width="0.7" stroke-dasharray="1.5,1"/>
<rect x="1463.8" y="424.5" width="26.5" height="26.5" fill="#fff" stroke="#222" stroke-width="1"/>
<rect x="1463.3" y="424" width="27.5" height="4.5" fill="#000"/>
<rect x="1464.5" y="425.2" width="3" height="3" fill="#fff"/>
<line x1="1468.05" y1="434.5" x2="1480.05" y2="434.5" stroke="#999" stroke-width="0.8"/>
<line x1="1468.05" y1="437.7" x2="1480.05" y2="437.7" stroke="#999" stroke-width="0.8"/>
<line x1="1468.05" y1="440.9" x2="1480.05" y2="440.9" stroke="#999" stroke-width="0.8"/>
<line x1="1468.05" y1="444.1" x2="1480.05" y2="444.1" stroke="#999" stroke-width="0.8"/>
<line x1="1463.3" y1="447" x2="1490.3" y2="447" stroke="#222" stroke-width="0.7"/><line x1="1473.05" y1="449.5" x2="1487.05" y2="449.5" stroke="#666" stroke-width="1"/>
<rect x="1463.8" y="471.5" width="26.5" height="26.5" fill="#fff" stroke="#222" stroke-width="1"/>
<rect x="1463.3" y="471" width="27.5" height="4.5" fill="#000"/>
<rect x="1464.5" y="472.2" width="3" height="3" fill="#fff"/>
<rect x="1471.05" y="479.5" width="12" height="15" rx="1" fill="#c08a3a" stroke="#8a5a18" stroke-width="0.6"/><rect x="1472.55" y="481.5" width="9" height="11.5" fill="#f5f5f5"/><rect x="1474.05" y="478.0" width="6" height="3" fill="#888"/>
<line x1="1474.05" y1="484.5" x2="1480.05" y2="484.5" stroke="#bbb" stroke-width="0.7"/>
<line x1="1474.05" y1="487.0" x2="1480.05" y2="487.0" stroke="#bbb" stroke-width="0.7"/>
<line x1="1474.05" y1="489.5" x2="1480.05" y2="489.5" stroke="#bbb" stroke-width="0.7"/>
</svg>
<div id="status" class="a"></div>
<div class="a" style="left:2px;top:806px;font-size:9.8px;line-height:12px;color:#1a1a1a;letter-spacing:0.2px">80,20</div>
<div class="a" style="left:2px;top:827px;font-size:9.8px;line-height:12px;color:#1a1a1a;letter-spacing:0.2px">@60,10</div>
<div class="a" style="left:252.5px;top:802px;width:1px;height:40px;background:#8a8a8a"></div>
<div class="a" style="left:256px;top:806px;font-size:9.8px;line-height:12px;color:#1a1a1a;letter-spacing:0.2px">82.4621&lt;14°</div>
<div class="a" style="left:256px;top:827px;font-size:9.8px;line-height:12px;color:#1a1a1a;letter-spacing:0.2px">@60.8276&lt;9°</div>
<div class="a" style="left:617px;top:817px;font-size:10px;line-height:12px;color:#1a1a1a;letter-spacing:0.1px">Bestemmingspunt</div>
<div class="a" style="left:754px;top:817px;font-size:10px;line-height:12px;color:#1a1a1a;letter-spacing:0.3px">Terug</div>
<div class="a" style="left:949px;top:811px;font-size:10px;line-height:11px;color:#1a1a1a;letter-spacing:0.15px">Geselecteerde objecten:<br>26 objecten op 3 laagen.</div>
<svg style="left:0;top:0" width="1500" height="844">
<circle cx="509.5" cy="822" r="2.6" fill="#c4c4c4"/>
<circle cx="942" cy="822" r="2.6" fill="#c4c4c4"/>
<circle cx="1272" cy="822" r="2.6" fill="#c4c4c4"/>
<rect x="717.5" y="806.5" width="17" height="29" rx="8.5" fill="#fff" stroke="#444" stroke-width="0.9"/>
<path d="M717.5,819 Q726,817 734.5,819" fill="none" stroke="#444" stroke-width="1.1"/>
<line x1="726" y1="806.5" x2="726" y2="818" stroke="#444" stroke-width="0.7"/>
<rect x="724.5" y="809" width="3" height="6" rx="1.5" fill="#fff" stroke="#444" stroke-width="0.8"/>
</svg>

<div class="a" style="left:537px;top:288px;width:425px;height:267px;background:#ececec;border:2px solid #a4a4a4;box-shadow:0 0 1px #000"></div>
<div class="a" style="left:566px;top:314px;font-size:11.6px;line-height:14px;color:#111">Aantal kopieën</div>
<div class="a" style="left:559px;top:327px;width:180px;height:113px;background:#e3e3e3;border:1px solid #dadada;border-radius:5px"></div>
<div class="a" style="left:593px;top:344px;font-size:13.3px;line-height:16px;color:#222">Origineel verwijderen</div>
<div class="a" style="left:593px;top:363px;font-size:13.3px;line-height:16px;color:#222">Origineel bewaren</div>
<div class="a" style="left:593px;top:382px;font-size:13.3px;line-height:16px;color:#222">Meerdere kopieën</div>
<div class="a" style="left:575px;top:406px;width:148px;height:19px;background:#fff;border-bottom:1px solid #c8c8c8;box-shadow:0 0 0 0.5px #d0d0d0"></div>
<div class="a" style="left:576px;top:408px;font-size:13.3px;line-height:16px;color:#111">10</div>
<div class="a" style="left:757px;top:310px;width:175px;height:157px;background:#fff;border:1px solid #000"></div>
<div class="a" style="left:775px;top:477px;font-size:13.5px;line-height:16px;color:#222;white-space:nowrap">Huidige laag en attributen g</div>
<div class="a" style="left:757px;top:477px;width:14px;height:14px;background:#fff;border:1px solid #c4c4c4;border-radius:3px"></div>
<div class="a" style="left:775px;top:514px;width:82px;height:21px;background:#fff;border-radius:5px;box-shadow:0 0 0 0.5px #c0c0c0,0 1px 1px #bbb"></div>
<div class="a" style="left:775px;top:517px;width:82px;text-align:center;font-size:13.3px;line-height:16px;color:#111">Annuleer</div>
<div class="a" style="left:873px;top:515px;width:67px;height:20px;background:linear-gradient(#2f8cff,#1070f0);border-radius:5px"></div>
<div class="a" style="left:873px;top:516px;width:67px;text-align:center;font-size:13.3px;line-height:16px;color:#fff">OK</div>
<svg style="left:0;top:0" width="1500" height="844">
<circle cx="580.7" cy="351" r="6.5" fill="#fff" stroke="#cfcfcf" stroke-width="0.8"/>
<circle cx="580.7" cy="370" r="6.5" fill="#fff" stroke="#cfcfcf" stroke-width="0.8"/>
<circle cx="580.7" cy="389" r="6.8" fill="#1a7cf5"/>
<circle cx="580.7" cy="389" r="2.5" fill="#fff"/>
<g fill="#f2f2f2" stroke="#222" stroke-width="1">
<path d="M769.5,367 L769.5,410.5 L786,410.5 Z"/>
<path d="M822.5,367 L822.5,410.5 L839,410.5 Z"/>
<path d="M852.5,367 L852.5,410.5 L869,410.5 Z"/>
<path d="M882.5,367 L882.5,410.5 L899,410.5 Z"/>
</g>
<path d="M787.5,388.5 H801 V385 L812.5,390.3 L801,395.5 V392 H787.5 Z" fill="#fff" stroke="#2222ee" stroke-width="1"/>
<g fill="#111"><rect x="907" y="407" width="2.2" height="2.2"/><rect x="911.5" y="407" width="2.2" height="2.2"/><rect x="916" y="407" width="2.2" height="2.2"/></g>
<!-- cursor highlight -->
<defs><filter id="blr" x="-20%" y="-20%" width="140%" height="140%"><feGaussianBlur stdDeviation="0.9"/></filter></defs>
<circle cx="648" cy="388.7" r="37" fill="rgba(255,255,255,0.22)" stroke="rgba(105,135,180,0.55)" stroke-width="5.5" filter="url(#blr)"/>
<circle cx="648" cy="388.7" r="36.5" fill="none" stroke="rgba(230,240,250,0.35)" stroke-width="1.2"/>
<g transform="translate(648.5,389.5) scale(1.15) translate(-648.5,-389.5)"><path d="M648.5,389.5 L648.5,409 L653,404.5 L656.5,412 L659.5,410.8 L656,403.5 L662,403.5 Z" fill="#fff" stroke="#000" stroke-width="1" stroke-linejoin="round"/></g>
</svg>


</div></body></html>
